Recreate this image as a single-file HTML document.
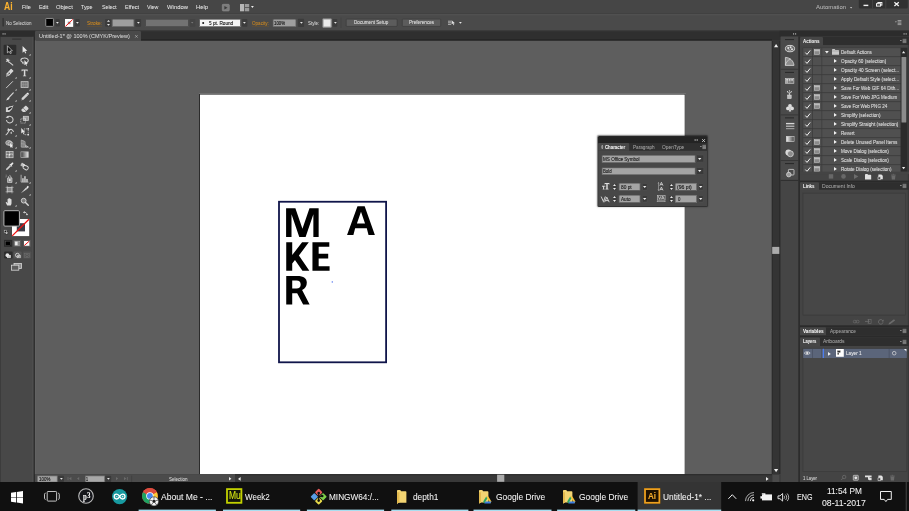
<!DOCTYPE html>
<html lang="en">
<head>
<meta charset="utf-8">
<title>Illustrator</title>
<style>
*{margin:0;padding:0;box-sizing:border-box}
html,body{width:909px;height:511px;overflow:hidden;background:#5e5e5e;font-family:"Liberation Sans",sans-serif;color:#d6d6d6}
body{position:relative}
.a{position:absolute;display:block}
.b{position:absolute;display:block;left:0;top:0;transform-origin:0 0}
.t{position:absolute;display:block;white-space:nowrap;line-height:1;font-size:56px;color:#dcdcdc;transform:scale(.1);transform-origin:0 0;-webkit-text-stroke:.5px currentColor}
svg{position:absolute;display:block;overflow:visible}
</style>
</head>
<body>
<div class="a" id="w" style="left:0;top:0;width:909px;height:511px;overflow:hidden;will-change:transform">
<!-- canvas -->
<div class="b" style="width:7370px;height:4340px;transform:translate(35px,40.6px) scale(.1);background:#5e5e5e;"></div>
<div class="b" style="width:4867px;height:3820px;transform:translate(199px,93.6px) scale(.1);background:#fff;border:10px solid #2b2b2b;"></div>
<svg width="909" height="511" viewBox="0 0 909 511" style="left:0;top:0">
<rect x="279" y="201.75" width="107.1" height="160.55" fill="none" stroke="#10154a" stroke-width="1.8"/>
<g fill="#000">
<path d="M286.09 208.37L295.39 208.37L302.44 228.67L309.48 208.37L318.65 208.37L318.65 236.98L313.36 236.98L313.36 214.22L305.61 236.98L299.27 236.98L291.51 214.22L291.51 236.98L286.09 236.98Z"/>
<path d="M347.05 234.98L357.48 206.37L364.67 206.37L374.88 234.98L368.54 234.98L366.78 228.22L355.15 228.22L353.39 234.98ZM361 211.87L365.02 223.49L356.91 223.49Z" fill-rule="evenodd"/>
<path d="M286.23 242.23L292.22 242.23L292.22 254.92L302.09 242.23L308.79 242.23L298.92 255.62L309.35 270.78L302.44 270.78L294.97 259.92L292.22 263.52L292.22 270.78L286.23 270.78Z"/>
<path d="M312.45 242.23L329.3 242.23L329.3 246.81L318.66 246.81L318.66 253.86L328.2 253.86L328.2 258.44L318.66 258.44L318.66 266.2L329.6 266.2L329.6 270.78L312.45 270.78Z"/>
<path d="M286.23 275.88L297.16 275.88C303.85 275.88 306.81 278.34 306.81 282.57C306.81 286.1 305.26 288.57 302.09 289.98L309.63 304.57L303.15 304.57L297.16 293.15L292.22 293.15L292.22 304.57L286.23 304.57ZM292.22 280.46L292.22 288.57L296.45 288.57C299.27 288.57 300.68 287.16 300.68 284.55C300.68 281.87 299.27 280.46 296.45 280.46Z" fill-rule="evenodd"/>
</g>
<rect x="331.7" y="281.3" width="1.2" height="1.3" fill="#5577ee"/>
</svg>
<!-- top -->
<div class="b" style="width:9090px;height:134px;transform:translate(0px,0px) scale(.1);background:#464646;"></div>
<div class="b" style="width:9090px;height:11px;transform:translate(0px,13.4px) scale(.1);background:#363636;"></div>
<span class="t" id="t1" style="left:4px;top:1px;font-size:106px;color:#fbb230;font-weight:bold;transform:scale(.0811,.1);">Ai</span>
<span class="t" id="t2" style="left:22px;top:4px;font-size:62px;color:#e4e4e4;transform:scale(.0881,.1);">File</span>
<span class="t" id="t3" style="left:38.9px;top:4px;font-size:62px;color:#e4e4e4;transform:scale(.087,.1);">Edit</span>
<span class="t" id="t4" style="left:56.3px;top:4px;font-size:62px;color:#e4e4e4;transform:scale(.0938,.1);">Object</span>
<span class="t" id="t5" style="left:81.2px;top:4px;font-size:62px;color:#e4e4e4;transform:scale(.0856,.1);">Type</span>
<span class="t" id="t6" style="left:101.5px;top:4px;font-size:62px;color:#e4e4e4;transform:scale(.0841,.1);">Select</span>
<span class="t" id="t7" style="left:124.6px;top:4px;font-size:62px;color:#e4e4e4;transform:scale(.0889,.1);">Effect</span>
<span class="t" id="t8" style="left:146.9px;top:4px;font-size:62px;color:#e4e4e4;transform:scale(.0855,.1);">View</span>
<span class="t" id="t9" style="left:167px;top:4px;font-size:62px;color:#e4e4e4;transform:scale(.0952,.1);">Window</span>
<span class="t" id="t10" style="left:195.8px;top:4px;font-size:62px;color:#e4e4e4;transform:scale(.0941,.1);">Help</span>
<svg style="left:222.2px;top:3.6px;" width="7.6" height="7.3" viewBox="0 0 7.6 7.3"><rect x=".3" y=".3" width="7" height="6.700" rx=".900" fill="#7c7c7c" stroke="#8e8e8e" stroke-width=".6"/><path d="M2.400 1.900V5.500L5.500 3.700Z" fill="#3a3a3a"/></svg>
<svg style="left:240px;top:3.6px;" width="9.6" height="7.3" viewBox="0 0 9.6 7.3"><rect x="0" y="0" width="4.200" height="7.300" fill="#b8b8b8"/><rect x="5" y="0" width="4.200" height="3.300" fill="#9c9c9c"/><rect x="5" y="4" width="4.200" height="3.300" fill="#9c9c9c"/></svg>
<svg style="left:250.5px;top:6.2px;" width="2.8" height="2" viewBox="0 0 2.8 2"><path d="M0 0H2.8L1.4 2Z" fill="#ececec"/></svg>
<span class="t" id="t11" style="left:815.8px;top:4px;font-size:60px;color:#b4b4b4;transform:scale(.0988,.1);">Automation</span>
<svg style="left:850.4px;top:7.45px;" width="2.2" height="1.5" viewBox="0 0 2.2 1.5"><path d="M0 0H2.2L1.1 1.5Z" fill="#c8c8c8"/></svg>
<div class="b" style="width:490px;height:84px;transform:translate(858.8px,0px) scale(.1);background:#313131;border-radius:0 0 15px 15px;"></div>
<div class="b" style="width:7px;height:84px;transform:translate(872.3px,0px) scale(.1);background:#4a4a4a;"></div>
<div class="b" style="width:7px;height:84px;transform:translate(885.5px,0px) scale(.1);background:#4a4a4a;"></div>
<div class="b" style="width:48px;height:14px;transform:translate(863.5px,4.7px) scale(.1);background:#f2f2f2;"></div>
<svg style="left:875.8px;top:2.4px;" width="6.4" height="4.4" viewBox="0 0 6.4 4.4"><rect x="1.9" y=".5" width="4" height="2.6" fill="none" stroke="#f2f2f2" stroke-width="1"/><rect x=".5" y="1.7" width="4" height="2.4" fill="#313131" stroke="#f2f2f2" stroke-width="1"/></svg>
<svg style="left:893.8px;top:2.3px;" width="5.2" height="4.4" viewBox="0 0 5.2 4.4"><path d="M.4 .3L4.8 4.1M4.8 .3L.4 4.1" stroke="#f2f2f2" stroke-width="1.3"/></svg>
<div class="b" style="width:9090px;height:156px;transform:translate(0px,14.5px) scale(.1);background:#4a4a4a;"></div>
<div class="b" style="width:9090px;height:7px;transform:translate(0px,14.5px) scale(.1);background:#585858;"></div>
<div class="b" style="width:12px;height:84px;transform:translate(2.5px,18px) scale(.1);background:#2e2e2e;"></div>
<span class="t" id="t12" style="left:6.3px;top:21px;font-size:49px;color:#d2d2d2;transform:scale(.0914,.1);">No Selection</span>
<div class="b" style="width:86px;height:88px;transform:translate(45.3px,18px) scale(.1);background:#000;border:9px solid #9c9c9c;border-radius:12px;"></div>
<div class="b" style="width:46px;height:75px;transform:translate(55.3px,18.9px) scale(.1);background:#3c3c3c;border-radius:10px;"></div><svg style="left:56.2px;top:22px;" width="2.8" height="1.7" viewBox="0 0 2.8 1.7"><path d="M0 0H2.8L1.4 1.7Z" fill="#e6e6e6"/></svg>
<svg style="left:65px;top:18.9px;" width="8.2" height="7.9" viewBox="0 0 8.2 7.9"><rect width="8.2" height="7.9" fill="#fff"/><rect x="2.8" y="2.6" width="2.6" height="2.6" fill="#8d8d8d"/><path d="M.4 7.5L7.8 .4" stroke="#ee1111" stroke-width="1"/></svg>
<div class="b" style="width:46px;height:75px;transform:translate(75.2px,18.9px) scale(.1);background:#3c3c3c;border-radius:10px;"></div><svg style="left:76.1px;top:22px;" width="2.8" height="1.7" viewBox="0 0 2.8 1.7"><path d="M0 0H2.8L1.4 1.7Z" fill="#e6e6e6"/></svg>
<span class="t" id="t13" style="left:86.6px;top:21px;font-size:52px;color:#d18a1f;transform:scale(.0905,.1);border-bottom:4px dotted #8a5c1c;padding-bottom:3px;">Stroke:</span>
<div class="b" style="width:60px;height:78px;transform:translate(105px,19px) scale(.1);background:#3c3c3c;border-radius:10px;"></div>
<svg style="left:106.5px;top:20.1px;" width="3" height="1.8" viewBox="0 0 3 1.8"><path d="M0 1.8H3L1.5 0Z" fill="#e6e6e6"/></svg>
<svg style="left:106.5px;top:23.9px;" width="3" height="1.8" viewBox="0 0 3 1.8"><path d="M0 0H3L1.5 1.8Z" fill="#e6e6e6"/></svg>
<div class="b" style="width:220px;height:78px;transform:translate(112.1px,19px) scale(.1);background:#9e9e9e;border:4px solid #3c3c3c;"></div>
<div class="b" style="width:59px;height:78px;transform:translate(135.2px,19px) scale(.1);background:#3c3c3c;border-radius:10px;"></div><svg style="left:136.75px;top:22.25px;" width="2.8" height="1.7" viewBox="0 0 2.8 1.7"><path d="M0 0H2.8L1.4 1.7Z" fill="#e6e6e6"/></svg>
<div class="b" style="width:430px;height:78px;transform:translate(145.5px,19px) scale(.1);background:#727272;border:5px solid #3a3a3a;"></div>
<div class="b" style="width:55px;height:78px;transform:translate(189.8px,19px) scale(.1);background:#444;border-radius:10px;"></div>
<svg style="left:191.3px;top:22.35px;" width="2.4" height="1.5" viewBox="0 0 2.4 1.5"><path d="M0 0H2.4L1.2 1.5Z" fill="#7a7a7a"/></svg>
<div class="b" style="width:410px;height:78px;transform:translate(199.5px,19px) scale(.1);background:#f4f4f4;border:5px solid #2c2c2c;"></div>
<div class="b" style="width:20px;height:20px;transform:translate(202.2px,21.9px) scale(.1);background:#111;border-radius:50%;"></div>
<span class="t" id="t14" style="left:209.1px;top:21px;font-size:48px;color:#151515;transform:scale(.0975,.1);-webkit-text-stroke:1.2px currentColor;">5 pt. Round</span>
<div class="b" style="width:54px;height:78px;transform:translate(242px,19px) scale(.1);background:#3c3c3c;border-radius:10px;"></div><svg style="left:243.3px;top:22.25px;" width="2.8" height="1.7" viewBox="0 0 2.8 1.7"><path d="M0 0H2.8L1.4 1.7Z" fill="#e6e6e6"/></svg>
<span class="t" id="t15" style="left:252px;top:21px;font-size:52px;color:#d18a1f;transform:scale(.0881,.1);border-bottom:4px dotted #8a5c1c;padding-bottom:3px;">Opacity:</span>
<div class="b" style="width:232px;height:78px;transform:translate(272.9px,19px) scale(.1);background:#9e9e9e;border:4px solid #3c3c3c;"></div>
<span class="t" id="t16" style="left:274.2px;top:21px;font-size:48px;color:#151515;transform:scale(.0912,.1);-webkit-text-stroke:1.2px currentColor;">100%</span>
<div class="b" style="width:62px;height:82px;transform:translate(297.9px,18.8px) scale(.1);background:#3c3c3c;border-radius:10px;"></div><svg style="left:299.6px;top:22.25px;" width="2.8" height="1.7" viewBox="0 0 2.8 1.7"><path d="M0 0H2.8L1.4 1.7Z" fill="#e6e6e6"/></svg>
<span class="t" id="t17" style="left:307.5px;top:21px;font-size:52px;color:#d8d8d8;transform:scale(.0869,.1);">Style:</span>
<div class="b" style="width:85px;height:85px;transform:translate(322.8px,18.8px) scale(.1);background:#ececec;border:8px solid #a2a2a2;"></div>
<div class="b" style="width:46px;height:78px;transform:translate(332.7px,19px) scale(.1);background:#3c3c3c;border-radius:10px;"></div><svg style="left:333.6px;top:22.25px;" width="2.8" height="1.7" viewBox="0 0 2.8 1.7"><path d="M0 0H2.8L1.4 1.7Z" fill="#e6e6e6"/></svg>
<div class="b" style="width:6px;height:105px;transform:translate(340.7px,17.5px) scale(.1);background:#414141;"></div>
<div class="b" style="width:515px;height:79px;transform:translate(345.9px,18.8px) scale(.1);background:#5c5c5c;border:6px solid #353535;border-radius:10px;"></div>
<span class="t" id="t18" style="left:354.3px;top:20px;font-size:49px;color:#e2e2e2;transform:scale(.094,.1);">Document Setup</span>
<div class="b" style="width:390px;height:79px;transform:translate(402px,18.8px) scale(.1);background:#5c5c5c;border:6px solid #353535;border-radius:10px;"></div>
<span class="t" id="t19" style="left:409.2px;top:20px;font-size:49px;color:#e2e2e2;transform:scale(.0954,.1);">Preferences</span>
<svg style="left:447.5px;top:20.3px;" width="7.2" height="5.4" viewBox="0 0 7.2 5.4"><path d="M0 1.2H3M0 2.8H3M0 4.4H3" stroke="#c8c8c8" stroke-width=".8"/><path d="M3.6 .2V4.6L4.8 3.6L5.6 5.3L6.3 5L5.5 3.3H7Z" fill="#e0e0e0"/></svg>
<svg style="left:458.6px;top:22.1px;" width="2.8" height="1.8" viewBox="0 0 2.8 1.8"><path d="M0 0H2.8L1.4 1.8Z" fill="#e6e6e6"/></svg>
<svg style="left:894.5px;top:20.4px;" width="6.4" height="4.8" viewBox="0 0 6.4 4.8"><path d="M0 1.5H1.8L.9 2.6Z" fill="#cfcfcf"/><path d="M2.6 .5H6.4M2.6 1.9H6.4M2.6 3.3H6.4M2.6 4.6H6.4" stroke="#bdbdbd" stroke-width=".7"/></svg>
<div class="b" style="width:9090px;height:103px;transform:translate(0px,30.1px) scale(.1);background:#2f2f2f;"></div>
<div class="b" style="width:6310px;height:13px;transform:translate(141px,39.3px) scale(.1);background:#232323;"></div>
<div class="b" style="width:9090px;height:12px;transform:translate(0px,30.1px) scale(.1);background:#3c3c3c;"></div>
<div class="b" style="width:1060px;height:94px;transform:translate(35px,31px) scale(.1);background:#4a4a4a;border-radius:12px 12px 0 0;"></div>
<span class="t" id="t20" style="left:39.3px;top:33px;font-size:53px;color:#d6d6d6;transform:scale(.1042,.1);">Untitled-1* @ 100% (CMYK/Preview)</span>
<svg style="left:135.4px;top:34.6px;" width="2.8" height="2.8" viewBox="0 0 2.8 2.8"><path d="M.2 .2L2.600 2.600M2.600 .2L.2 2.600" stroke="#b4b4b4" stroke-width=".7"/></svg>
<!-- tools -->
<div class="b" style="width:342px;height:4458px;transform:translate(0px,36.6px) scale(.1);background:#484848;"></div>
<div class="b" style="width:18px;height:4458px;transform:translate(32px,36.6px) scale(.1);background:#4d4d4d;"></div>
<div class="b" style="width:12px;height:4458px;transform:translate(33.7px,36.6px) scale(.1);background:#272727;"></div>
<div class="b" style="width:12px;height:4340px;transform:translate(34.9px,40.4px) scale(.1);background:#626262;"></div>
<div class="b" style="width:8px;height:4458px;transform:translate(0px,36.6px) scale(.1);background:#3a3a3a;"></div>
<div class="b" style="width:350px;height:58px;transform:translate(0px,30.8px) scale(.1);background:#2c2c2c;"></div>
<svg style="left:2.2px;top:33.3px;" width="3.6" height="1.8" viewBox="0 0 3.6 1.8"><path d="M1.5 0V1.8L0 .9ZM3.5 0V1.8L2 .9Z" fill="#bdbdbd"/></svg>
<div class="b" style="width:92px;height:8px;transform:translate(12.2px,38.7px) scale(.1);background:#2a2a2a;"></div>
<div class="b" style="width:127px;height:102px;transform:translate(3.6px,44.8px) scale(.1);background:#2c2c2c;border-radius:10px;"></div>
<svg style="left:5.1px;top:45.1px;" width="9.2" height="9.2" viewBox="0 0 10 10"><path d="M2.6 .8L2.6 8.6L4.5 6.9L5.8 9.4L6.9 8.9L5.7 6.5L8 6.3Z" fill="#111" stroke="#cfcfcf" stroke-width=".8" stroke-linejoin="round"/></svg>
<svg style="left:19.5px;top:45.1px;" width="9.2" height="9.2" viewBox="0 0 10 10"><path d="M2.8 1.2L2.8 8.4L4.6 6.8L5.8 9.2L6.8 8.7L5.7 6.4L7.9 6.2Z" fill="#e6e6e6"/></svg><svg style="left:28.9px;top:53.6px;" width="1.5" height="1.5" viewBox="0 0 1.5 1.5"><path d="M1.6 0V1.6H0Z" fill="#e8e8e8"/></svg>
<svg style="left:5.1px;top:56.78px;" width="9.2" height="9.2" viewBox="0 0 10 10"><path d="M4.2 5.2L8.9 9.2" stroke="#d8d8d8" stroke-width="1.1"/><path d="M3.2 .8L3.8 2.9L6 3.2L4.1 4.2L4.3 6.4L2.9 4.8L.8 5.4L2 3.6L.9 1.8L2.9 2.4Z" fill="#dcdcdc"/></svg>
<svg style="left:19.5px;top:56.78px;" width="9.2" height="9.2" viewBox="0 0 10 10"><path d="M4.6 1.2C7 1 9 2.2 9 3.9C9 5.3 7.6 6.2 6 6.3M3.4 5.9C1.8 5.4 .8 4.6 .9 3.5C1 2.2 2.6 1.3 4.6 1.2" fill="none" stroke="#d4d4d4" stroke-width="1.1"/><path d="M4.8 3.4L4.8 9L6 7.9L6.9 9.6L7.7 9.2L6.9 7.6L8.5 7.5Z" fill="#e6e6e6"/><circle cx="3.5" cy="6.5" r=".9" fill="none" stroke="#d4d4d4" stroke-width=".7"/></svg>
<svg style="left:5.1px;top:68.46px;" width="9.2" height="9.2" viewBox="0 0 10 10"><path d="M1 9.4L2 5.6L6.2 1.2L8.8 3.8L4.6 8.2Z" fill="#d8d8d8"/><path d="M1.4 9L4.3 6.1" stroke="#4a4a4a" stroke-width=".7"/><circle cx="4.6" cy="5.6" r=".8" fill="#4a4a4a"/><path d="M6.7 .7L9.3 3.3L8.7 3.9L6.1 1.3Z" fill="#f0f0f0"/></svg><svg style="left:14.5px;top:76.96px;" width="1.5" height="1.5" viewBox="0 0 1.5 1.5"><path d="M1.6 0V1.6H0Z" fill="#e8e8e8"/></svg>
<svg style="left:19.5px;top:68.46px;" width="9.2" height="9.2" viewBox="0 0 10 10"><path d="M1.7 1.6H8.3V3.6H7.6C7.5 2.8 7.2 2.6 6.4 2.6H5.8V7.6C5.8 8.2 6 8.4 6.8 8.4V9H3.2V8.4C4 8.4 4.2 8.2 4.2 7.6V2.6H3.6C2.8 2.6 2.5 2.8 2.4 3.6H1.7Z" fill="#dadada"/></svg><svg style="left:28.9px;top:76.96px;" width="1.5" height="1.5" viewBox="0 0 1.5 1.5"><path d="M1.6 0V1.6H0Z" fill="#e8e8e8"/></svg>
<svg style="left:5.1px;top:80.14px;" width="9.2" height="9.2" viewBox="0 0 10 10"><path d="M1.2 8.8L8.6 1.4" stroke="#d4d4d4" stroke-width="1"/></svg><svg style="left:14.5px;top:88.64px;" width="1.5" height="1.5" viewBox="0 0 1.5 1.5"><path d="M1.6 0V1.6H0Z" fill="#e8e8e8"/></svg>
<svg style="left:19.5px;top:80.14px;" width="9.2" height="9.2" viewBox="0 0 10 10"><rect x="1.2" y="1.8" width="7.6" height="6.4" fill="#7a7a7a" stroke="#c8c8c8" stroke-width=".9"/><path d="M3.7 1.8V8.2M6.3 1.8V8.2M1.2 5H8.8" stroke="#9c9c9c" stroke-width=".5"/></svg><svg style="left:28.9px;top:88.64px;" width="1.5" height="1.5" viewBox="0 0 1.5 1.5"><path d="M1.6 0V1.6H0Z" fill="#e8e8e8"/></svg>
<svg style="left:5.1px;top:91.82px;" width="9.2" height="9.2" viewBox="0 0 10 10"><path d="M9 1L4.6 5.6" stroke="#d6d6d6" stroke-width="1.3" stroke-linecap="round"/><path d="M1 8.9C2.6 9.1 4.4 8.4 4.9 6.9C5.1 6.2 4.4 5.4 3.6 5.7C2.4 6.2 2.6 8 1 8.9Z" fill="#e2e2e2"/></svg><svg style="left:14.5px;top:100.32px;" width="1.5" height="1.5" viewBox="0 0 1.5 1.5"><path d="M1.6 0V1.6H0Z" fill="#e8e8e8"/></svg>
<svg style="left:19.5px;top:91.82px;" width="9.2" height="9.2" viewBox="0 0 10 10"><path d="M1.2 9.2L1.9 6.6L6.9 1.6L8.8 3.5L3.8 8.5Z" fill="#d2d2d2"/><path d="M7.4 1.1C7.9 .6 8.7 .6 9.2 1.1C9.7 1.6 9.7 2.4 9.2 2.9L8.8 3.3L7 1.5Z" fill="#f2f2f2"/><path d="M1.2 9.2L1.6 7.7L2.7 8.8Z" fill="#3a3a3a"/></svg><svg style="left:28.9px;top:100.32px;" width="1.5" height="1.5" viewBox="0 0 1.5 1.5"><path d="M1.6 0V1.6H0Z" fill="#e8e8e8"/></svg>
<svg style="left:5.1px;top:103.5px;" width="9.2" height="9.2" viewBox="0 0 10 10"><path d="M1 3.6L4.2 3.6L4.2 2.6L7.8 2.2L9.4 1L8.6 2.8L7.6 5.8L4.6 8.6L1 8.6Z" fill="#d2d2d2"/><path d="M3 5.8C4 4.4 6 3.6 7.8 3.4C7.4 5 5.6 6.6 3.6 6.9Z" fill="#222"/></svg>
<svg style="left:19.5px;top:103.5px;" width="9.2" height="9.2" viewBox="0 0 10 10"><path d="M1.4 6.2L5.6 2.2C6 1.8 6.6 1.8 7 2.2L9 4.2C9.4 4.6 9.4 5.2 9 5.6L5.6 8.6H3.2L1.4 6.9C1.2 6.7 1.2 6.4 1.4 6.2Z" fill="#d6d6d6"/><path d="M3.4 4.4L6.6 7.6" stroke="#6a6a6a" stroke-width=".8"/></svg><svg style="left:28.9px;top:112px;" width="1.5" height="1.5" viewBox="0 0 1.5 1.5"><path d="M1.6 0V1.6H0Z" fill="#e8e8e8"/></svg>
<svg style="left:5.1px;top:115.18px;" width="9.2" height="9.2" viewBox="0 0 10 10"><path d="M3 2.2A3.6 3.6 0 1 1 1.6 5.4" fill="none" stroke="#d2d2d2" stroke-width="1.1"/><path d="M.6 2.8L3.6 .6L3.8 3.6Z" fill="#d2d2d2"/></svg><svg style="left:14.5px;top:123.68px;" width="1.5" height="1.5" viewBox="0 0 1.5 1.5"><path d="M1.6 0V1.6H0Z" fill="#e8e8e8"/></svg>
<svg style="left:19.5px;top:115.18px;" width="9.2" height="9.2" viewBox="0 0 10 10"><rect x="3.6" y="1.4" width="5.6" height="4.6" fill="#9a9a9a" stroke="#d0d0d0" stroke-width=".8"/><rect x=".8" y="4.2" width="5.2" height="4.6" fill="none" stroke="#c2c2c2" stroke-width=".8" stroke-dasharray="1.2 .8"/><path d="M3 3.4L5.8 3.4L5.8 6.2" fill="none" stroke="#e6e6e6" stroke-width=".7"/></svg><svg style="left:28.9px;top:123.68px;" width="1.5" height="1.5" viewBox="0 0 1.5 1.5"><path d="M1.6 0V1.6H0Z" fill="#e8e8e8"/></svg>
<svg style="left:5.1px;top:126.86px;" width="9.2" height="9.2" viewBox="0 0 10 10"><path d="M.8 8.6C2.6 8 3.2 6.2 4 4.6C4.6 3.2 5.8 2.2 7.2 2.8C8.2 3.2 8.8 4.4 9.4 5.2" fill="none" stroke="#d4d4d4" stroke-width="1.2"/><path d="M3.2 1.2L5.6 3.4L2.6 4.4Z" fill="#e0e0e0"/><path d="M5.4 6.6L7.4 4.8L7.6 7.6Z" fill="#c8c8c8"/></svg><svg style="left:14.5px;top:135.36px;" width="1.5" height="1.5" viewBox="0 0 1.5 1.5"><path d="M1.6 0V1.6H0Z" fill="#e8e8e8"/></svg>
<svg style="left:19.5px;top:126.86px;" width="9.2" height="9.2" viewBox="0 0 10 10"><path d="M1.4 1.2L1.4 7L2.8 5.8L3.8 7.8L4.6 7.4L3.7 5.5L5.4 5.4Z" fill="#e8e8e8"/><rect x="4.6" y="2" width="4.4" height="6.4" fill="none" stroke="#c8c8c8" stroke-width=".8" stroke-dasharray="1.1 .8"/><rect x="8.2" y="1.2" width="1.6" height="1.6" fill="#e0e0e0"/><rect x="8.2" y="7.6" width="1.6" height="1.6" fill="#e0e0e0"/></svg>
<svg style="left:5.1px;top:138.54px;" width="9.2" height="9.2" viewBox="0 0 10 10"><ellipse cx="4" cy="4.2" rx="3.2" ry="2.6" fill="#8a8a8a" stroke="#d0d0d0" stroke-width=".8"/><ellipse cx="5.8" cy="5" rx="2.6" ry="2.2" fill="none" stroke="#d0d0d0" stroke-width=".8"/><path d="M5.6 4.4L5.6 9.4L6.8 8.4L7.6 9.9L8.3 9.5L7.6 8.1L9 8Z" fill="#f0f0f0"/></svg><svg style="left:14.5px;top:147.04px;" width="1.5" height="1.5" viewBox="0 0 1.5 1.5"><path d="M1.6 0V1.6H0Z" fill="#e8e8e8"/></svg>
<svg style="left:19.5px;top:138.54px;" width="9.2" height="9.2" viewBox="0 0 10 10"><path d="M1.4 1.2V8.8M3.4 2V8.8M5.4 2.8V8.8M1.4 1.2L5.4 2.8M1.4 5L5.4 5.6M1.4 8.8H9.2M5.4 6.4L9.2 8.8M5.4 7.6L7.4 8.8" stroke="#d0d0d0" stroke-width=".8" fill="none"/><path d="M1.4 1.2L5.4 2.8V8.8H1.4Z" fill="#8c8c8c" opacity=".7"/></svg><svg style="left:28.9px;top:147.04px;" width="1.5" height="1.5" viewBox="0 0 1.5 1.5"><path d="M1.6 0V1.6H0Z" fill="#e8e8e8"/></svg>
<svg style="left:5.1px;top:150.22px;" width="9.2" height="9.2" viewBox="0 0 10 10"><rect x="1.2" y="1.6" width="7.6" height="6.8" fill="#7a7a7a" stroke="#d0d0d0" stroke-width=".8"/><path d="M1.2 5C3 4 4 6 5 5S7.4 4.2 8.8 5M5 1.6C4.2 3.4 5.8 4.4 5 5.4S4.4 7.2 5 8.4" fill="none" stroke="#e4e4e4" stroke-width=".7"/><circle cx="5" cy="5.1" r=".8" fill="#f4f4f4"/></svg>
<svg style="left:19.5px;top:150.22px;" width="9.2" height="9.2" viewBox="0 0 10 10"><defs><linearGradient id="gg"><stop offset="0" stop-color="#3a3a3a"/><stop offset="1" stop-color="#e4e4e4"/></linearGradient></defs><rect x="1" y="2" width="8" height="6" fill="url(#gg)" stroke="#bcbcbc" stroke-width=".7"/></svg>
<svg style="left:5.1px;top:161.9px;" width="9.2" height="9.2" viewBox="0 0 10 10"><path d="M1 9L1.6 7.2L5.4 3.4L6.6 4.6L2.8 8.4Z" fill="#d0d0d0"/><path d="M4.9 2.6L7.4 5.1L8 4.5L7.2 3.7L8.8 2.1C9.3 1.6 9.3 1.1 8.9 .7C8.5 .3 8 .3 7.5 .8L5.9 2.4L5.5 2Z" fill="#ececec"/></svg><svg style="left:14.5px;top:170.4px;" width="1.5" height="1.5" viewBox="0 0 1.5 1.5"><path d="M1.6 0V1.6H0Z" fill="#e8e8e8"/></svg>
<svg style="left:19.5px;top:161.9px;" width="9.2" height="9.2" viewBox="0 0 10 10"><rect x="1" y="1.4" width="4.2" height="3.6" rx=".6" fill="#bdbdbd" transform="rotate(28 3 3)"/><rect x="3.4" y="4" width="5.6" height="4" rx="1.6" fill="none" stroke="#dadada" stroke-width="1" transform="rotate(28 6 6)"/><path d="M2.6 2L6.2 4.2" stroke="#e6e6e6" stroke-width=".9"/></svg>
<svg style="left:5.1px;top:173.58px;" width="9.2" height="9.2" viewBox="0 0 10 10"><path d="M2.8 4.4H7.6V9.2H2.8Z" fill="#8e8e8e" stroke="#d2d2d2" stroke-width=".8"/><path d="M3.8 4.4V3L5.2 1.6L6.6 3V4.4" fill="none" stroke="#d2d2d2" stroke-width=".8"/><circle cx="5.2" cy="6.6" r="1.2" fill="#e0e0e0"/><path d="M.8 1.2H1.6M1.6 2.4H2.4M.6 3.2H1.4" stroke="#d0d0d0" stroke-width=".6"/></svg><svg style="left:14.5px;top:182.08px;" width="1.5" height="1.5" viewBox="0 0 1.5 1.5"><path d="M1.6 0V1.6H0Z" fill="#e8e8e8"/></svg>
<svg style="left:19.5px;top:173.58px;" width="9.2" height="9.2" viewBox="0 0 10 10"><path d="M1.2 .8V8.8H9.2" fill="none" stroke="#d2d2d2" stroke-width=".8"/><rect x="2.4" y="4.6" width="1.6" height="4" fill="#d0d0d0"/><rect x="4.6" y="2.4" width="1.6" height="6.2" fill="#d0d0d0"/><rect x="6.8" y="5.4" width="1.6" height="3.2" fill="#d0d0d0"/></svg><svg style="left:28.9px;top:182.08px;" width="1.5" height="1.5" viewBox="0 0 1.5 1.5"><path d="M1.6 0V1.6H0Z" fill="#e8e8e8"/></svg>
<svg style="left:5.1px;top:185.26px;" width="9.2" height="9.2" viewBox="0 0 10 10"><rect x="2.4" y="2.6" width="5.2" height="4.8" fill="#8a8a8a" stroke="#cfcfcf" stroke-width=".7"/><path d="M.6 2.6H9.4M.6 7.4H9.4M2.4 .8V9.2M7.6 .8V9.2" stroke="#c4c4c4" stroke-width=".6"/></svg>
<svg style="left:19.5px;top:185.26px;" width="9.2" height="9.2" viewBox="0 0 10 10"><path d="M1 9L6.6 2.8L8.2 4.2Z" fill="#d4d4d4"/><path d="M6.9 2.5L8.6 .8L9.6 1.8L8.4 4Z" fill="#f0f0f0"/></svg><svg style="left:28.9px;top:193.76px;" width="1.5" height="1.5" viewBox="0 0 1.5 1.5"><path d="M1.6 0V1.6H0Z" fill="#e8e8e8"/></svg>
<svg style="left:5.1px;top:196.94px;" width="9.2" height="9.2" viewBox="0 0 10 10"><path d="M2.4 9.2L.9 6.2C.6 5.6 1.4 5.1 1.9 5.7L2.8 6.8V2.4C2.8 1.6 3.8 1.6 3.8 2.4V1.6C3.8 .8 4.9 .8 4.9 1.6V2C4.9 1.3 6 1.3 6 2.1V2.8C6 2.1 7.1 2.1 7.1 2.9V6.4C7.1 7.6 6.6 8.4 6.2 9.2Z" fill="#dcdcdc"/></svg><svg style="left:14.5px;top:205.44px;" width="1.5" height="1.5" viewBox="0 0 1.5 1.5"><path d="M1.6 0V1.6H0Z" fill="#e8e8e8"/></svg>
<svg style="left:19.5px;top:196.94px;" width="9.2" height="9.2" viewBox="0 0 10 10"><circle cx="4" cy="4" r="2.6" fill="#7c7c7c" stroke="#d6d6d6" stroke-width="1"/><path d="M6 6L9 9" stroke="#d6d6d6" stroke-width="1.5" stroke-linecap="round"/></svg>
<svg style="left:11.6px;top:218.7px;" width="17.2" height="17.1" viewBox="0 0 17.2 17.1"><rect width="17.2" height="17.1" fill="#fff"/><rect x="4.8" y="4.2" width="8.2" height="8.2" fill="#3c3c46"/><path d="M.2 16.9L17 .3" stroke="#f01010" stroke-width="1.3"/></svg>
<div class="b" style="width:165px;height:164px;transform:translate(3.4px,210.2px) scale(.1);background:#000;border:10px solid #b4b4b4;border-radius:15px;"></div>
<svg style="left:23.3px;top:211px;" width="5" height="4.6" viewBox="0 0 5 4.6"><path d="M.6 1.4C2.6 .8 4 2 4 4" fill="none" stroke="#cfcfcf" stroke-width=".9"/><path d="M0 1.4L1.8 0V2.6ZM4 4.6L2.8 3H5.2Z" fill="#cfcfcf"/></svg>
<svg style="left:3.8px;top:230.3px;" width="4" height="4.2" viewBox="0 0 4 4.2"><rect x="1.4" y="1.6" width="2.4" height="2.4" fill="#fff" stroke="#222" stroke-width=".5"/><rect x=".2" y=".2" width="2.4" height="2.4" fill="#111" stroke="#ddd" stroke-width=".5"/></svg>
<div class="b" style="width:80px;height:69px;transform:translate(4.1px,239.9px) scale(.1);background:#2a2a2a;"></div>
<div class="b" style="width:54px;height:48px;transform:translate(5.4px,241px) scale(.1);background:#000;border:5px solid #555;"></div>
<div class="b" style="width:78px;height:69px;transform:translate(13.4px,239.9px) scale(.1);background:#5a5a5a;"></div>
<div class="b" style="width:54px;height:48px;transform:translate(14.6px,241px) scale(.1);background:linear-gradient(90deg,#fff,#e8e8e8 40%,#555);border:5px solid #bbb;"></div>
<div class="b" style="width:75px;height:69px;transform:translate(23.3px,239.9px) scale(.1);background:#5a5a5a;"></div>
<svg style="left:24.4px;top:241px;" width="5.4" height="4.8" viewBox="0 0 5.4 4.8"><rect width="5.4" height="4.8" fill="#fff"/><path d="M.2 4.6L5.2 .2" stroke="#f01010" stroke-width="1"/></svg>
<div class="b" style="width:85px;height:68px;transform:translate(4.1px,251.6px) scale(.1);background:#2c2c2c;border-radius:10px;"></div>
<svg style="left:5.4px;top:252.6px;" width="6" height="5" viewBox="0 0 6 5"><circle cx="2.4" cy="2.2" r="1.9" fill="#e4e4e4"/><rect x="2.6" y="2.2" width="3" height="2.6" fill="#c8c8c8" stroke="#f0f0f0" stroke-width=".5"/></svg>
<div class="b" style="width:79px;height:68px;transform:translate(13.7px,251.6px) scale(.1);background:#565656;border-radius:10px;"></div>
<svg style="left:14.6px;top:252.6px;" width="6" height="5" viewBox="0 0 6 5"><rect x="2.6" y="2.2" width="3" height="2.6" fill="#9a9a9a" stroke="#d0d0d0" stroke-width=".5"/><circle cx="2.4" cy="2.2" r="1.9" fill="none" stroke="#dadada" stroke-width=".9"/></svg>
<div class="b" style="width:82px;height:68px;transform:translate(23px,251.6px) scale(.1);background:#525252;border-radius:10px;"></div>
<svg style="left:24.2px;top:252.6px;" width="6" height="5" viewBox="0 0 6 5"><rect x=".6" y=".4" width="4.8" height="4.2" fill="none" stroke="#6c6c6c" stroke-width=".6"/><circle cx="3" cy="2.5" r="1.3" fill="none" stroke="#6e6e6e" stroke-width=".7"/></svg>
<svg style="left:11px;top:263.2px;" width="11" height="7.6" viewBox="0 0 11 7.6"><rect x="3" y=".4" width="7.6" height="5" fill="#8c8c8c" stroke="#d6d6d6" stroke-width=".8"/><rect x=".4" y="2.2" width="7.4" height="5" fill="#5c5c5c" stroke="#d6d6d6" stroke-width=".8"/></svg>
<!-- charpanel -->
<div class="b" style="width:1100px;height:710px;transform:translate(597.6px,135.9px) scale(.1);background:#2a2a2a;border-radius:15px;box-shadow:0 0 15px rgba(0,0,0,.5);"></div>
<div class="b" style="width:1088px;height:67px;transform:translate(598.2px,136.4px) scale(.1);background:#232323;border-radius:12px 12px 0 0;"></div>
<div class="b" style="width:1088px;height:76px;transform:translate(598.2px,143.1px) scale(.1);background:#2f2f2f;"></div>
<div class="b" style="width:1088px;height:556px;transform:translate(598.2px,150.7px) scale(.1);background:#484848;"></div>
<svg style="left:694.2px;top:139.1px;" width="3.8" height="1.9" viewBox="0 0 3.8 1.9"><path d="M1.6 0V1.9L0 .95ZM3.7 0V1.9L2.1 .95Z" fill="#bdbdbd"/></svg>
<svg style="left:702.1px;top:138.5px;" width="3.1" height="3.1" viewBox="0 0 3.1 3.1"><path d="M.2 .2L2.9 2.9M2.9 .2L.2 2.9" stroke="#d8d8d8" stroke-width=".9"/></svg>
<div class="b" style="width:310px;height:76px;transform:translate(598.2px,143.1px) scale(.1);background:#484848;border-radius:10px 10px 0 0;"></div>
<svg style="left:600.6px;top:145.3px;" width="2.4" height="4" viewBox="0 0 2.4 4"><path d="M1.2 0L2.3 1.4H.1ZM1.2 4L2.3 2.6H.1Z" fill="#e0e0e0"/></svg>
<span class="t" id="t21" style="left:604.6px;top:145px;font-size:48px;color:#f4f4f4;font-weight:bold;transform:scale(.0901,.1);">Character</span>
<span class="t" id="t22" style="left:632.8px;top:145px;font-size:48px;color:#a4a4a4;transform:scale(.0968,.1);">Paragraph</span>
<span class="t" id="t23" style="left:661.9px;top:145px;font-size:48px;color:#a4a4a4;transform:scale(.1007,.1);">OpenType</span>
<svg style="left:699.8px;top:145.4px;" width="6" height="3.8" viewBox="0 0 6 3.8"><path d="M0 1H1.8L.9 2.1Z" fill="#cfcfcf"/><path d="M2.4 .3H6M2.4 1.4H6M2.4 2.5H6M2.4 3.6H6" stroke="#bdbdbd" stroke-width=".6"/></svg>
<div class="b" style="width:934px;height:77px;transform:translate(601.9px,155.1px) scale(.1);background:#a4a4a4;border:4px solid #3a3a3a;"></div>
<span class="t" id="t24" style="left:603.3px;top:157px;font-size:48px;color:#1e1e1e;transform:scale(.0955,.1);-webkit-text-stroke:1.3px currentColor;">MS Office Symbol</span>
<div class="b" style="width:77px;height:76px;transform:translate(696.3px,154.8px) scale(.1);background:#393939;border-radius:10px;border:5px solid #545454;"></div><svg style="left:698.45px;top:157.75px;" width="3.4" height="2.1" viewBox="0 0 3.4 2.1"><path d="M0 0H3.4L1.7 2.1Z" fill="#f0f0f0"/></svg>
<div class="b" style="width:934px;height:72px;transform:translate(601.9px,167.7px) scale(.1);background:#a4a4a4;border:4px solid #3a3a3a;"></div>
<span class="t" id="t25" style="left:603.3px;top:169px;font-size:48px;color:#1e1e1e;transform:scale(.0895,.1);-webkit-text-stroke:1.3px currentColor;">Bold</span>
<div class="b" style="width:77px;height:76px;transform:translate(696.3px,167.2px) scale(.1);background:#393939;border-radius:10px;border:5px solid #545454;"></div><svg style="left:698.45px;top:170.15px;" width="3.4" height="2.1" viewBox="0 0 3.4 2.1"><path d="M0 0H3.4L1.7 2.1Z" fill="#f0f0f0"/></svg>
<svg style="left:601.7px;top:183.3px;" width="7.4" height="6.4" viewBox="0 0 7.4 6.4"><path d="M2.6 0H7.4V1.6H6.9C6.8 1 6.6 .9 6 .9H5.7V5.2C5.7 5.7 5.9 5.8 6.5 5.8V6.4H3.5V5.8C4.100 5.8 4.3 5.700 4.3 5.2V.9H4C3.4 .9 3.2 1 3.100 1.6H2.6Z" fill="#dedede"/><path d="M0 2.800H3.2V4H2.900C2.800 3.600 2.700 3.500 2.300 3.500H2.100V5.600C2.100 5.900 2.200 5.900 2.600 5.900V6.400H.700V5.900C1 5.900 1.100 5.900 1.100 5.600V3.500H.900C.500 3.500 .400 3.600 .300 4H0Z" fill="#dedede"/></svg>
<div class="b" style="width:48px;height:72px;transform:translate(612.3px,183.4px) scale(.1);background:#3d3d3d;border-radius:10px;border:4px solid #505050;"></div><svg style="left:613.2px;top:184.39px;" width="3" height="1.9" viewBox="0 0 3 1.9"><path d="M0 1.9H3L1.5 0Z" fill="#ececec"/></svg><svg style="left:613.2px;top:187.71px;" width="3" height="1.9" viewBox="0 0 3 1.9"><path d="M0 0H3L1.5 1.9Z" fill="#ececec"/></svg>
<div class="b" style="width:213px;height:75px;transform:translate(618.9px,183px) scale(.1);background:#a4a4a4;border:4px solid #3a3a3a;"></div>
<span class="t" id="t26" style="left:620.6px;top:185px;font-size:47px;color:#1e1e1e;transform:scale(.1024,.1);-webkit-text-stroke:1.3px currentColor;">80 pt</span>
<div class="b" style="width:52px;height:70px;transform:translate(642.2px,183.3px) scale(.1);background:#393939;border-radius:10px;border:5px solid #545454;"></div><svg style="left:643.1px;top:185.95px;" width="3.4" height="2.1" viewBox="0 0 3.4 2.1"><path d="M0 0H3.4L1.7 2.1Z" fill="#f0f0f0"/></svg>
<svg style="left:658.2px;top:182.4px;" width="6.8" height="8.6" viewBox="0 0 6.8 8.6"><path d="M1.800 3.600L3.400 .300L5 3.600M2.400 2.600H4.400M1.800 8.400L3.400 5.100L5 8.400M2.400 7.400H4.400" fill="none" stroke="#dcdcdc" stroke-width=".8"/><path d="M.500 .600V8.400M0 1.400L.500 .500L1 1.400M0 7.600L.500 8.500L1 7.600" fill="none" stroke="#c8c8c8" stroke-width=".5"/></svg>
<div class="b" style="width:50px;height:72px;transform:translate(668.6px,183.4px) scale(.1);background:#3d3d3d;border-radius:10px;border:4px solid #505050;"></div><svg style="left:669.6px;top:184.39px;" width="3" height="1.9" viewBox="0 0 3 1.9"><path d="M0 1.9H3L1.5 0Z" fill="#ececec"/></svg><svg style="left:669.6px;top:187.71px;" width="3" height="1.9" viewBox="0 0 3 1.9"><path d="M0 0H3L1.5 1.9Z" fill="#ececec"/></svg>
<div class="b" style="width:218px;height:75px;transform:translate(675px,183px) scale(.1);background:#a4a4a4;border:4px solid #3a3a3a;"></div>
<span class="t" id="t27" style="left:676.8px;top:185px;font-size:47px;color:#1e1e1e;transform:scale(.1089,.1);-webkit-text-stroke:1.3px currentColor;">(96 pt)</span>
<div class="b" style="width:50px;height:70px;transform:translate(698.4px,183.3px) scale(.1);background:#393939;border-radius:10px;border:5px solid #545454;"></div><svg style="left:699.2px;top:185.95px;" width="3.4" height="2.1" viewBox="0 0 3.4 2.1"><path d="M0 0H3.4L1.7 2.1Z" fill="#f0f0f0"/></svg>
<svg style="left:600.8px;top:195.6px;" width="8.6" height="6.8" viewBox="0 0 8.6 6.8"><path d="M.200 .600L2.400 5.600L4.400 .600M3.600 6.200L5.800 1.200L8.200 6.200M4.600 4.600H7.200" fill="none" stroke="#dcdcdc" stroke-width=".9"/><path d="M4.300 .300L2.300 6.600" stroke="#bdbdbd" stroke-width=".5"/></svg>
<div class="b" style="width:48px;height:72px;transform:translate(612.3px,195.3px) scale(.1);background:#3d3d3d;border-radius:10px;border:4px solid #505050;"></div><svg style="left:613.2px;top:196.29px;" width="3" height="1.9" viewBox="0 0 3 1.9"><path d="M0 1.9H3L1.5 0Z" fill="#ececec"/></svg><svg style="left:613.2px;top:199.61px;" width="3" height="1.9" viewBox="0 0 3 1.9"><path d="M0 0H3L1.5 1.9Z" fill="#ececec"/></svg>
<div class="b" style="width:213px;height:77px;transform:translate(618.9px,195px) scale(.1);background:#a4a4a4;border:4px solid #3a3a3a;"></div>
<span class="t" id="t28" style="left:621px;top:197px;font-size:47px;color:#1e1e1e;transform:scale(.0993,.1);-webkit-text-stroke:1.3px currentColor;">Auto</span>
<div class="b" style="width:52px;height:70px;transform:translate(642.2px,195.3px) scale(.1);background:#393939;border-radius:10px;border:5px solid #545454;"></div><svg style="left:643.1px;top:197.95px;" width="3.4" height="2.1" viewBox="0 0 3.4 2.1"><path d="M0 0H3.4L1.7 2.1Z" fill="#f0f0f0"/></svg>
<svg style="left:657.4px;top:195.3px;" width="8.4" height="7.2" viewBox="0 0 8.4 7.2"><rect x=".3" y=".3" width="7.8" height="4.800" fill="none" stroke="#c8c8c8" stroke-width=".6"/><path d="M1.200 1.100L2.600 4.300L4 1.100M4.400 4.300L5.800 1.100L7.200 4.300M5 3.300H6.600" fill="none" stroke="#e0e0e0" stroke-width=".7"/><path d="M.300 6.400H8.100M.300 5.800V7M8.100 5.800V7" stroke="#c8c8c8" stroke-width=".6"/></svg>
<div class="b" style="width:50px;height:72px;transform:translate(668.6px,195.3px) scale(.1);background:#3d3d3d;border-radius:10px;border:4px solid #505050;"></div><svg style="left:669.6px;top:196.29px;" width="3" height="1.9" viewBox="0 0 3 1.9"><path d="M0 1.9H3L1.5 0Z" fill="#ececec"/></svg><svg style="left:669.6px;top:199.61px;" width="3" height="1.9" viewBox="0 0 3 1.9"><path d="M0 0H3L1.5 1.9Z" fill="#ececec"/></svg>
<div class="b" style="width:218px;height:77px;transform:translate(675px,195px) scale(.1);background:#a4a4a4;border:4px solid #3a3a3a;"></div>
<span class="t" id="t29" style="left:677.5px;top:197px;font-size:47px;color:#1e1e1e;transform:scale(.0918,.1);-webkit-text-stroke:1.3px currentColor;">0</span>
<div class="b" style="width:50px;height:70px;transform:translate(698.4px,195.3px) scale(.1);background:#393939;border-radius:10px;border:5px solid #545454;"></div><svg style="left:699.2px;top:197.95px;" width="3.4" height="2.1" viewBox="0 0 3.4 2.1"><path d="M0 0H3.4L1.7 2.1Z" fill="#f0f0f0"/></svg>
<!-- right -->
<div class="b" style="width:91px;height:4338px;transform:translate(771.7px,40.4px) scale(.1);background:#292929;"></div>
<div class="b" style="width:67px;height:4338px;transform:translate(772.6px,40.4px) scale(.1);background:#343434;"></div>
<svg style="left:773.6px;top:43.8px;" width="4.2" height="3.2" viewBox="0 0 4.2 3.2"><path d="M0 3.2H4.2L2.1 0Z" fill="#f0f0f0"/></svg>
<svg style="left:773.6px;top:468.7px;" width="4.2" height="3.2" viewBox="0 0 4.2 3.2"><path d="M0 0H4.2L2.1 3.2Z" fill="#f0f0f0"/></svg>
<div class="b" style="width:71px;height:70px;transform:translate(772.2px,246.9px) scale(.1);background:#ababab;"></div>
<div class="b" style="width:1300px;height:60px;transform:translate(779.5px,30.8px) scale(.1);background:#2c2c2c;"></div>
<div class="b" style="width:193px;height:4460px;transform:translate(780.7px,36.6px) scale(.1);background:#454545;"></div>
<div class="b" style="width:176px;height:1434px;transform:translate(780.7px,36.6px) scale(.1);background:#4a4a4a;"></div>
<div class="b" style="width:176px;height:10px;transform:translate(780.7px,179.9px) scale(.1);background:#2e2e2e;"></div>
<div class="b" style="width:17px;height:4460px;transform:translate(798.3px,36.6px) scale(.1);background:#2c2c2c;"></div>
<svg style="left:793.2px;top:32.9px;" width="3.8" height="1.8" viewBox="0 0 3.8 1.8"><path d="M0 0V1.800L1.500 .900ZM2.100 0V1.800L3.600 .900Z" fill="#bdbdbd"/></svg>
<svg style="left:903px;top:32.9px;" width="3.8" height="1.8" viewBox="0 0 3.8 1.8"><path d="M1.500 0V1.800L0 .900ZM3.600 0V1.800L2.100 .900Z" fill="#bdbdbd"/></svg>
<div class="b" style="width:90px;height:11px;transform:translate(785px,39px) scale(.1);background:#2a2a2a;"></div>
<div class="b" style="width:90px;height:11px;transform:translate(785px,71.9px) scale(.1);background:#2a2a2a;"></div>
<div class="b" style="width:90px;height:11px;transform:translate(785px,117.3px) scale(.1);background:#2a2a2a;"></div>
<div class="b" style="width:90px;height:11px;transform:translate(785px,163px) scale(.1);background:#2a2a2a;"></div>
<div class="b" style="width:176px;height:8px;transform:translate(780.7px,68.8px) scale(.1);background:#333;"></div>
<div class="b" style="width:176px;height:8px;transform:translate(780.7px,114.5px) scale(.1);background:#333;"></div>
<div class="b" style="width:176px;height:8px;transform:translate(780.7px,160.2px) scale(.1);background:#333;"></div>
<svg style="left:784.8px;top:44.8px;" width="10" height="7.2" viewBox="0 0 10 7.2"><ellipse cx="5" cy="3.600" rx="4.600" ry="3.200" fill="#6a6a6a" stroke="#dcdcdc" stroke-width=".9"/><circle cx="3.200" cy="3" r="1" fill="#e6e6e6"/><circle cx="5.600" cy="2.200" r="1" fill="#e6e6e6"/><circle cx="7" cy="4.200" r="1" fill="#e6e6e6"/><path d="M3 5.200C4 4.600 5 4.800 5.600 5.600" stroke="#e0e0e0" stroke-width=".7" fill="none"/></svg>
<svg style="left:785.2px;top:57px;" width="9.4" height="8.8" viewBox="0 0 9.4 8.8"><path d="M.400 8.400V.400C5 .600 8.600 3.800 9 8.400Z" fill="#8c8c8c" stroke="#dadada" stroke-width=".8"/><path d="M.400 8.400C1 5 2.800 3 5.800 2" fill="none" stroke="#e4e4e4" stroke-width=".6"/></svg>
<svg style="left:785.2px;top:77.8px;" width="9.2" height="5.6" viewBox="0 0 9.2 5.6"><rect x=".3" y=".3" width="8.600" height="5" fill="#777" stroke="#d6d6d6" stroke-width=".6"/><rect x="1.200" y="1.200" width="1.800" height="1.400" fill="#eee"/><rect x="3.700" y="1.200" width="1.800" height="1.400" fill="#eee"/><rect x="6.200" y="1.200" width="1.800" height="1.400" fill="#ddd"/><rect x="1.200" y="3.300" width="1.800" height="1.400" fill="#ccc"/><rect x="3.700" y="3.300" width="1.800" height="1.400" fill="#999"/></svg>
<svg style="left:786.4px;top:89.6px;" width="6.8" height="8.8" viewBox="0 0 6.8 8.8"><rect x="1.600" y="5" width="3.600" height="3.600" fill="#bdbdbd" stroke="#e4e4e4" stroke-width=".5"/><path d="M3.400 5V2.400M1.200 1L2.400 3.200M5.600 1L4.400 3.200M3.400 .200V1.600" stroke="#dedede" stroke-width=".9"/></svg>
<svg style="left:785.8px;top:103.5px;" width="8" height="7.4" viewBox="0 0 8 7.4"><circle cx="4" cy="2" r="1.900" fill="#dedede"/><circle cx="2" cy="4.400" r="1.900" fill="#dedede"/><circle cx="6" cy="4.400" r="1.900" fill="#dedede"/><path d="M4 3.500L5.200 7.400H2.800Z" fill="#dedede"/></svg>
<svg style="left:785.6px;top:123.1px;" width="8.4" height="6.4" viewBox="0 0 8.4 6.4"><path d="M0 .600H8.400" stroke="#d6d6d6" stroke-width="1.400"/><path d="M0 3.200H8.400" stroke="#d6d6d6" stroke-width="1"/><path d="M0 5.700H8.400" stroke="#d6d6d6" stroke-width=".7"/></svg>
<svg style="left:785.6px;top:136.2px;" width="8.4" height="6" viewBox="0 0 8.4 6"><defs><linearGradient id="g2"><stop offset="0" stop-color="#f4f4f4"/><stop offset="1" stop-color="#444"/></linearGradient></defs><rect x=".3" y=".3" width="7.800" height="5.400" fill="url(#g2)" stroke="#d2d2d2" stroke-width=".6"/></svg>
<svg style="left:785.4px;top:148.9px;" width="8.8" height="8.2" viewBox="0 0 8.8 8.2"><circle cx="3.400" cy="3.400" r="3" fill="#dadada"/><circle cx="5.400" cy="4.800" r="3" fill="#8c8c8c" stroke="#e2e2e2" stroke-width=".7"/></svg>
<svg style="left:785.6px;top:168.5px;" width="8.4" height="8.2" viewBox="0 0 8.4 8.2"><rect x="2.400" y=".400" width="5.600" height="5.600" rx=".800" fill="none" stroke="#d8d8d8" stroke-width=".8"/><circle cx="2.800" cy="5.600" r="2.300" fill="#9a9a9a" stroke="#e2e2e2" stroke-width=".7"/></svg>
<div class="b" style="width:1090px;height:4458px;transform:translate(800px,36.6px) scale(.1);background:#444;"></div>
<div class="b" style="width:12px;height:4454px;transform:translate(907.8px,36.6px) scale(.1);background:#383838;"></div>
<div class="b" style="width:1090px;height:80px;transform:translate(800px,37px) scale(.1);background:#2e2e2e;"></div><div class="b" style="width:230px;height:85px;transform:translate(800px,37px) scale(.1);background:#464646;border-radius:10px 10px 0 0;"></div><span class="t" id="t30" style="left:803.4px;top:39px;font-size:49px;color:#f2f2f2;font-weight:bold;transform:scale(.0913,.1);">Actions</span><svg style="left:900.4px;top:39.1px;" width="6.4" height="3.8" viewBox="0 0 6.4 3.8"><path d="M0 1H1.8L.9 2.100Z" fill="#cfcfcf"/><path d="M2.6 .3H6.400M2.600 1.400H6.400M2.600 2.500H6.400M2.600 3.600H6.400" stroke="#b4b4b4" stroke-width=".6"/></svg>
<div class="b" style="width:980px;height:1240px;transform:translate(802.6px,47.7px) scale(.1);background:#3a3a3a;"></div>
<div class="b" style="width:68px;height:1240px;transform:translate(900.6px,47.7px) scale(.1);background:#2b2b2b;"></div>
<svg style="left:902.4px;top:50.9px;" width="3.2" height="2.2" viewBox="0 0 3.2 2.2"><path d="M0 2.2H3.2L1.6 0Z" fill="#f0f0f0"/></svg>
<svg style="left:902.4px;top:166.9px;" width="3.2" height="2.2" viewBox="0 0 3.2 2.2"><path d="M0 0H3.2L1.6 2.2Z" fill="#f0f0f0"/></svg>
<div class="b" style="width:48px;height:656px;transform:translate(901.5px,57px) scale(.1);background:#8c8c8c;border-radius:5px;"></div>
<div class="b" style="width:88px;height:82px;transform:translate(803.2px,48.1px) scale(.1);background:#505050;"></div>
<div class="b" style="width:88px;height:82px;transform:translate(812.7px,48.1px) scale(.1);background:#505050;"></div>
<div class="b" style="width:782px;height:82px;transform:translate(822.2px,48.1px) scale(.1);background:#505050;"></div>
<svg style="left:804.8px;top:49.8px;" width="5.6" height="4.8" viewBox="0 0 5.6 4.8"><path d="M.400 2.600L2 4.400L5.200 .400" fill="none" stroke="#f2f2f2" stroke-width="1"/></svg>
<svg style="left:814.1px;top:49.4px;" width="6" height="5.6" viewBox="0 0 6 5.6"><rect x=".3" y=".3" width="5.400" height="5" fill="#8a8a8a" stroke="#c6c6c6" stroke-width=".6"/><path d="M.300 1.700H5.700" stroke="#d6d6d6" stroke-width=".8"/></svg>
<svg style="left:824.5px;top:51px;" width="3.8" height="2.6" viewBox="0 0 3.8 2.6"><path d="M0 0H3.8L1.9 2.6Z" fill="#f0f0f0"/></svg>
<svg style="left:832.3px;top:49.2px;" width="7" height="5.8" viewBox="0 0 7 5.8"><path d="M0 .800C0 .300 .300 0 .800 0H2.600L3.400 .900H6.200C6.700 .900 7 1.200 7 1.700V5.800H0Z" fill="#c9c9c9"/><path d="M0 2H7" stroke="#8a8a8a" stroke-width=".5"/></svg>
<span class="t" id="t31" style="left:841.2px;top:50px;font-size:50px;color:#e2e2e2;transform:scale(.0924,.1);">Default Actions</span>
<div class="b" style="width:88px;height:82px;transform:translate(803.2px,57.1px) scale(.1);background:#505050;"></div>
<div class="b" style="width:88px;height:82px;transform:translate(812.7px,57.1px) scale(.1);background:#505050;"></div>
<div class="b" style="width:782px;height:82px;transform:translate(822.2px,57.1px) scale(.1);background:#505050;"></div>
<svg style="left:804.8px;top:58.8px;" width="5.6" height="4.8" viewBox="0 0 5.6 4.8"><path d="M.400 2.600L2 4.400L5.200 .400" fill="none" stroke="#f2f2f2" stroke-width="1"/></svg>
<svg style="left:834.05px;top:59.3px;" width="2.9" height="3.8" viewBox="0 0 2.9 3.8"><path d="M0 0V3.8L2.9 1.9Z" fill="#f2f2f2"/></svg>
<span class="t" id="t32" style="left:841.2px;top:59px;font-size:50px;color:#e2e2e2;transform:scale(.0935,.1);">Opacity 60 (selection)</span>
<div class="b" style="width:88px;height:82px;transform:translate(803.2px,66.1px) scale(.1);background:#505050;"></div>
<div class="b" style="width:88px;height:82px;transform:translate(812.7px,66.1px) scale(.1);background:#505050;"></div>
<div class="b" style="width:782px;height:82px;transform:translate(822.2px,66.1px) scale(.1);background:#505050;"></div>
<svg style="left:804.8px;top:67.8px;" width="5.6" height="4.8" viewBox="0 0 5.6 4.8"><path d="M.400 2.600L2 4.400L5.200 .400" fill="none" stroke="#f2f2f2" stroke-width="1"/></svg>
<svg style="left:834.05px;top:68.3px;" width="2.9" height="3.8" viewBox="0 0 2.9 3.8"><path d="M0 0V3.8L2.9 1.9Z" fill="#f2f2f2"/></svg>
<span class="t" id="t33" style="left:841.2px;top:68px;font-size:50px;color:#e2e2e2;transform:scale(.0948,.1);">Opacity 40 Screen (select...</span>
<div class="b" style="width:88px;height:82px;transform:translate(803.2px,75.1px) scale(.1);background:#505050;"></div>
<div class="b" style="width:88px;height:82px;transform:translate(812.7px,75.1px) scale(.1);background:#505050;"></div>
<div class="b" style="width:782px;height:82px;transform:translate(822.2px,75.1px) scale(.1);background:#505050;"></div>
<svg style="left:804.8px;top:76.8px;" width="5.6" height="4.8" viewBox="0 0 5.6 4.8"><path d="M.400 2.600L2 4.400L5.200 .400" fill="none" stroke="#f2f2f2" stroke-width="1"/></svg>
<svg style="left:834.05px;top:77.3px;" width="2.9" height="3.8" viewBox="0 0 2.9 3.8"><path d="M0 0V3.8L2.9 1.9Z" fill="#f2f2f2"/></svg>
<span class="t" id="t34" style="left:841.2px;top:77px;font-size:50px;color:#e2e2e2;transform:scale(.0931,.1);">Apply Default Style (select...</span>
<div class="b" style="width:88px;height:82px;transform:translate(803.2px,84.1px) scale(.1);background:#505050;"></div>
<div class="b" style="width:88px;height:82px;transform:translate(812.7px,84.1px) scale(.1);background:#505050;"></div>
<div class="b" style="width:782px;height:82px;transform:translate(822.2px,84.1px) scale(.1);background:#505050;"></div>
<svg style="left:804.8px;top:85.8px;" width="5.6" height="4.8" viewBox="0 0 5.6 4.8"><path d="M.400 2.600L2 4.400L5.200 .400" fill="none" stroke="#f2f2f2" stroke-width="1"/></svg>
<svg style="left:814.1px;top:85.4px;" width="6" height="5.6" viewBox="0 0 6 5.6"><rect x=".3" y=".3" width="5.400" height="5" fill="#8a8a8a" stroke="#c6c6c6" stroke-width=".6"/><path d="M.300 1.700H5.700" stroke="#d6d6d6" stroke-width=".8"/></svg>
<svg style="left:834.05px;top:86.3px;" width="2.9" height="3.8" viewBox="0 0 2.9 3.8"><path d="M0 0V3.8L2.9 1.9Z" fill="#f2f2f2"/></svg>
<span class="t" id="t35" style="left:841.2px;top:86px;font-size:50px;color:#e2e2e2;transform:scale(.0924,.1);">Save For Web GIF 64 Dith...</span>
<div class="b" style="width:88px;height:82px;transform:translate(803.2px,93.1px) scale(.1);background:#505050;"></div>
<div class="b" style="width:88px;height:82px;transform:translate(812.7px,93.1px) scale(.1);background:#505050;"></div>
<div class="b" style="width:782px;height:82px;transform:translate(822.2px,93.1px) scale(.1);background:#505050;"></div>
<svg style="left:804.8px;top:94.8px;" width="5.6" height="4.8" viewBox="0 0 5.6 4.8"><path d="M.400 2.600L2 4.400L5.200 .400" fill="none" stroke="#f2f2f2" stroke-width="1"/></svg>
<svg style="left:814.1px;top:94.4px;" width="6" height="5.6" viewBox="0 0 6 5.6"><rect x=".3" y=".3" width="5.400" height="5" fill="#8a8a8a" stroke="#c6c6c6" stroke-width=".6"/><path d="M.300 1.700H5.700" stroke="#d6d6d6" stroke-width=".8"/></svg>
<svg style="left:834.05px;top:95.3px;" width="2.9" height="3.8" viewBox="0 0 2.9 3.8"><path d="M0 0V3.8L2.9 1.9Z" fill="#f2f2f2"/></svg>
<span class="t" id="t36" style="left:841.2px;top:95px;font-size:50px;color:#e2e2e2;transform:scale(.0904,.1);">Save For Web JPG Medium</span>
<div class="b" style="width:88px;height:82px;transform:translate(803.2px,102.1px) scale(.1);background:#505050;"></div>
<div class="b" style="width:88px;height:82px;transform:translate(812.7px,102.1px) scale(.1);background:#505050;"></div>
<div class="b" style="width:782px;height:82px;transform:translate(822.2px,102.1px) scale(.1);background:#505050;"></div>
<svg style="left:804.8px;top:103.8px;" width="5.6" height="4.8" viewBox="0 0 5.6 4.8"><path d="M.400 2.600L2 4.400L5.200 .400" fill="none" stroke="#f2f2f2" stroke-width="1"/></svg>
<svg style="left:814.1px;top:103.4px;" width="6" height="5.6" viewBox="0 0 6 5.6"><rect x=".3" y=".3" width="5.400" height="5" fill="#8a8a8a" stroke="#c6c6c6" stroke-width=".6"/><path d="M.300 1.700H5.700" stroke="#d6d6d6" stroke-width=".8"/></svg>
<svg style="left:834.05px;top:104.3px;" width="2.9" height="3.8" viewBox="0 0 2.9 3.8"><path d="M0 0V3.8L2.9 1.9Z" fill="#f2f2f2"/></svg>
<span class="t" id="t37" style="left:841.2px;top:104px;font-size:50px;color:#e2e2e2;transform:scale(.0905,.1);">Save For Web PNG 24</span>
<div class="b" style="width:88px;height:82px;transform:translate(803.2px,111.1px) scale(.1);background:#505050;"></div>
<div class="b" style="width:88px;height:82px;transform:translate(812.7px,111.1px) scale(.1);background:#505050;"></div>
<div class="b" style="width:782px;height:82px;transform:translate(822.2px,111.1px) scale(.1);background:#505050;"></div>
<svg style="left:804.8px;top:112.8px;" width="5.6" height="4.8" viewBox="0 0 5.6 4.8"><path d="M.400 2.600L2 4.400L5.200 .400" fill="none" stroke="#f2f2f2" stroke-width="1"/></svg>
<svg style="left:834.05px;top:113.3px;" width="2.9" height="3.8" viewBox="0 0 2.9 3.8"><path d="M0 0V3.8L2.9 1.9Z" fill="#f2f2f2"/></svg>
<span class="t" id="t38" style="left:841.2px;top:113px;font-size:50px;color:#e2e2e2;transform:scale(.0942,.1);">Simplify (selection)</span>
<div class="b" style="width:88px;height:82px;transform:translate(803.2px,120.1px) scale(.1);background:#505050;"></div>
<div class="b" style="width:88px;height:82px;transform:translate(812.7px,120.1px) scale(.1);background:#505050;"></div>
<div class="b" style="width:782px;height:82px;transform:translate(822.2px,120.1px) scale(.1);background:#505050;"></div>
<svg style="left:804.8px;top:121.8px;" width="5.6" height="4.8" viewBox="0 0 5.6 4.8"><path d="M.400 2.600L2 4.400L5.200 .400" fill="none" stroke="#f2f2f2" stroke-width="1"/></svg>
<svg style="left:834.05px;top:122.3px;" width="2.9" height="3.8" viewBox="0 0 2.9 3.8"><path d="M0 0V3.8L2.9 1.9Z" fill="#f2f2f2"/></svg>
<span class="t" id="t39" style="left:841.2px;top:122px;font-size:50px;color:#e2e2e2;transform:scale(.0948,.1);">Simplify Straight (selection)</span>
<div class="b" style="width:88px;height:82px;transform:translate(803.2px,129.1px) scale(.1);background:#505050;"></div>
<div class="b" style="width:88px;height:82px;transform:translate(812.7px,129.1px) scale(.1);background:#505050;"></div>
<div class="b" style="width:782px;height:82px;transform:translate(822.2px,129.1px) scale(.1);background:#505050;"></div>
<svg style="left:804.8px;top:130.8px;" width="5.6" height="4.8" viewBox="0 0 5.6 4.8"><path d="M.400 2.600L2 4.400L5.200 .400" fill="none" stroke="#f2f2f2" stroke-width="1"/></svg>
<svg style="left:834.05px;top:131.3px;" width="2.9" height="3.8" viewBox="0 0 2.9 3.8"><path d="M0 0V3.8L2.9 1.9Z" fill="#f2f2f2"/></svg>
<span class="t" id="t40" style="left:841.2px;top:131px;font-size:50px;color:#e2e2e2;transform:scale(.0917,.1);">Revert</span>
<div class="b" style="width:88px;height:82px;transform:translate(803.2px,138.1px) scale(.1);background:#505050;"></div>
<div class="b" style="width:88px;height:82px;transform:translate(812.7px,138.1px) scale(.1);background:#505050;"></div>
<div class="b" style="width:782px;height:82px;transform:translate(822.2px,138.1px) scale(.1);background:#505050;"></div>
<svg style="left:804.8px;top:139.8px;" width="5.6" height="4.8" viewBox="0 0 5.6 4.8"><path d="M.400 2.600L2 4.400L5.200 .400" fill="none" stroke="#f2f2f2" stroke-width="1"/></svg>
<svg style="left:814.1px;top:139.4px;" width="6" height="5.6" viewBox="0 0 6 5.6"><rect x=".3" y=".3" width="5.400" height="5" fill="#8a8a8a" stroke="#c6c6c6" stroke-width=".6"/><path d="M.300 1.700H5.700" stroke="#d6d6d6" stroke-width=".8"/></svg>
<svg style="left:834.05px;top:140.3px;" width="2.9" height="3.8" viewBox="0 0 2.9 3.8"><path d="M0 0V3.8L2.9 1.9Z" fill="#f2f2f2"/></svg>
<span class="t" id="t41" style="left:841.2px;top:140px;font-size:50px;color:#e2e2e2;transform:scale(.0927,.1);">Delete Unused Panel Items</span>
<div class="b" style="width:88px;height:82px;transform:translate(803.2px,147.1px) scale(.1);background:#505050;"></div>
<div class="b" style="width:88px;height:82px;transform:translate(812.7px,147.1px) scale(.1);background:#505050;"></div>
<div class="b" style="width:782px;height:82px;transform:translate(822.2px,147.1px) scale(.1);background:#505050;"></div>
<svg style="left:804.8px;top:148.8px;" width="5.6" height="4.8" viewBox="0 0 5.6 4.8"><path d="M.400 2.600L2 4.400L5.200 .400" fill="none" stroke="#f2f2f2" stroke-width="1"/></svg>
<svg style="left:814.1px;top:148.4px;" width="6" height="5.6" viewBox="0 0 6 5.6"><rect x=".3" y=".3" width="5.400" height="5" fill="#8a8a8a" stroke="#c6c6c6" stroke-width=".6"/><path d="M.300 1.700H5.700" stroke="#d6d6d6" stroke-width=".8"/></svg>
<svg style="left:834.05px;top:149.3px;" width="2.9" height="3.8" viewBox="0 0 2.9 3.8"><path d="M0 0V3.8L2.9 1.9Z" fill="#f2f2f2"/></svg>
<span class="t" id="t42" style="left:841.2px;top:149px;font-size:50px;color:#e2e2e2;transform:scale(.0915,.1);">Move Dialog (selection)</span>
<div class="b" style="width:88px;height:82px;transform:translate(803.2px,156.1px) scale(.1);background:#505050;"></div>
<div class="b" style="width:88px;height:82px;transform:translate(812.7px,156.1px) scale(.1);background:#505050;"></div>
<div class="b" style="width:782px;height:82px;transform:translate(822.2px,156.1px) scale(.1);background:#505050;"></div>
<svg style="left:804.8px;top:157.8px;" width="5.6" height="4.8" viewBox="0 0 5.6 4.8"><path d="M.400 2.600L2 4.400L5.200 .400" fill="none" stroke="#f2f2f2" stroke-width="1"/></svg>
<svg style="left:814.1px;top:157.4px;" width="6" height="5.6" viewBox="0 0 6 5.6"><rect x=".3" y=".3" width="5.400" height="5" fill="#8a8a8a" stroke="#c6c6c6" stroke-width=".6"/><path d="M.300 1.700H5.700" stroke="#d6d6d6" stroke-width=".8"/></svg>
<svg style="left:834.05px;top:158.3px;" width="2.9" height="3.8" viewBox="0 0 2.9 3.8"><path d="M0 0V3.8L2.9 1.9Z" fill="#f2f2f2"/></svg>
<span class="t" id="t43" style="left:841.2px;top:158px;font-size:50px;color:#e2e2e2;transform:scale(.091,.1);">Scale Dialog (selection)</span>
<div class="b" style="width:88px;height:82px;transform:translate(803.2px,165.1px) scale(.1);background:#505050;"></div>
<div class="b" style="width:88px;height:82px;transform:translate(812.7px,165.1px) scale(.1);background:#505050;"></div>
<div class="b" style="width:782px;height:82px;transform:translate(822.2px,165.1px) scale(.1);background:#505050;"></div>
<svg style="left:804.8px;top:166.8px;" width="5.6" height="4.8" viewBox="0 0 5.6 4.8"><path d="M.400 2.600L2 4.400L5.200 .400" fill="none" stroke="#f2f2f2" stroke-width="1"/></svg>
<svg style="left:814.1px;top:166.4px;" width="6" height="5.6" viewBox="0 0 6 5.6"><rect x=".3" y=".3" width="5.400" height="5" fill="#8a8a8a" stroke="#c6c6c6" stroke-width=".6"/><path d="M.300 1.700H5.700" stroke="#d6d6d6" stroke-width=".8"/></svg>
<svg style="left:834.05px;top:167.3px;" width="2.9" height="3.8" viewBox="0 0 2.9 3.8"><path d="M0 0V3.8L2.9 1.9Z" fill="#f2f2f2"/></svg>
<span class="t" id="t44" style="left:841.2px;top:167px;font-size:50px;color:#e2e2e2;transform:scale(.0921,.1);">Rotate Dialog (selection)</span>
<div class="b" style="width:1090px;height:25px;transform:translate(800px,171.7px) scale(.1);background:#444;"></div>
<div class="b" style="width:44px;height:44px;transform:translate(828.8px,174.2px) scale(.1);background:#686868;"></div>
<div class="b" style="width:46px;height:46px;transform:translate(841.2px,174.1px) scale(.1);background:#686868;border-radius:50%;"></div>
<svg style="left:853.8px;top:173.9px;" width="4.4" height="5" viewBox="0 0 4.4 5"><path d="M0 0V5L4.4 2.5Z" fill="#6c6c6c"/></svg>
<svg style="left:865.2px;top:173.6px;" width="6.2" height="5.4" viewBox="0 0 6.2 5.4"><path d="M0 .800C0 .300 .300 0 .800 0H2.400L3.100 .800H5.500C6 .800 6.200 1.100 6.200 1.600V5.400H0Z" fill="#e0e0e0"/></svg>
<svg style="left:878.2px;top:173.6px;" width="5.2" height="5.6" viewBox="0 0 5.2 5.6"><path d="M.400 .400H3.400L4.800 1.800V5.200H.400Z" fill="#e4e4e4"/><path d="M0 2.800H2.600V5.600H0Z" fill="#444" stroke="#e4e4e4" stroke-width=".6"/></svg>
<svg style="left:890.5px;top:173.6px;" width="4.8" height="5.6" viewBox="0 0 4.8 5.6"><path d="M.400 1.600H4.400L4 5.400H.800Z" fill="#6a6a6a"/><path d="M0 1H4.800M1.600 .300H3.200" stroke="#6a6a6a" stroke-width=".7"/></svg>
<div class="b" style="width:1090px;height:17px;transform:translate(800px,180.6px) scale(.1);background:#2a2a2a;"></div>
<div class="b" style="width:1090px;height:74px;transform:translate(800px,182.3px) scale(.1);background:#2e2e2e;"></div><div class="b" style="width:190px;height:79px;transform:translate(800px,182.3px) scale(.1);background:#464646;border-radius:10px 10px 0 0;"></div><span class="t" id="t45" style="left:803.2px;top:184px;font-size:49px;color:#f2f2f2;font-weight:bold;transform:scale(.0898,.1);">Links</span><span class="t" id="t46" style="left:821.6px;top:184px;font-size:49px;color:#a6a6a6;transform:scale(.1032,.1);">Document Info</span><svg style="left:900.4px;top:184.1px;" width="6.4" height="3.8" viewBox="0 0 6.4 3.8"><path d="M0 1H1.8L.9 2.100Z" fill="#cfcfcf"/><path d="M2.6 .3H6.400M2.600 1.400H6.400M2.600 2.500H6.400M2.600 3.600H6.400" stroke="#b4b4b4" stroke-width=".6"/></svg>
<div class="b" style="width:1032px;height:1226px;transform:translate(802.6px,192.8px) scale(.1);background:#474747;border:7px solid #393939;"></div>
<svg style="left:852.6px;top:319.7px;" width="6.4" height="3.2" viewBox="0 0 6.4 3.2"><rect x=".3" y=".3" width="3" height="2.600" rx="1.300" fill="none" stroke="#6c6c6c" stroke-width=".7"/><rect x="3.100" y=".3" width="3" height="2.600" rx="1.300" fill="none" stroke="#6c6c6c" stroke-width=".7"/></svg>
<svg style="left:865px;top:318.9px;" width="6.4" height="4.8" viewBox="0 0 6.4 4.8"><path d="M0 2.400H4M2.600 .800L4.400 2.400L2.600 4" fill="none" stroke="#707070" stroke-width=".8"/><rect x="3.600" y=".300" width="2.500" height="4.200" fill="none" stroke="#707070" stroke-width=".6"/></svg>
<svg style="left:877.6px;top:318.7px;" width="5.6" height="5.2" viewBox="0 0 5.6 5.2"><path d="M4.800 1.800A2.300 2.300 0 1 0 5 3.400" fill="none" stroke="#707070" stroke-width=".8"/><path d="M5.600 .400V2.400H3.600Z" fill="#707070"/></svg>
<svg style="left:887.8px;top:318.5px;" width="7.4" height="5.8" viewBox="0 0 7.4 5.8"><path d="M.300 5.500L1.200 3.800L6 .300L7.100 1.500L2.400 5Z" fill="#6c6c6c"/></svg>
<div class="b" style="width:1090px;height:17px;transform:translate(800px,325.3px) scale(.1);background:#2a2a2a;"></div>
<div class="b" style="width:1090px;height:82px;transform:translate(800px,327.2px) scale(.1);background:#2e2e2e;"></div><div class="b" style="width:260px;height:87px;transform:translate(800px,327.2px) scale(.1);background:#464646;border-radius:10px 10px 0 0;"></div><span class="t" id="t47" style="left:802.6px;top:329px;font-size:49px;color:#f2f2f2;font-weight:bold;transform:scale(.0957,.1);">Variables</span><span class="t" id="t48" style="left:829.9px;top:329px;font-size:49px;color:#a6a6a6;transform:scale(.098,.1);">Appearance</span><svg style="left:900.4px;top:329.4px;" width="6.4" height="3.8" viewBox="0 0 6.4 3.8"><path d="M0 1H1.8L.9 2.100Z" fill="#cfcfcf"/><path d="M2.6 .3H6.400M2.600 1.400H6.400M2.600 2.500H6.400M2.600 3.600H6.400" stroke="#b4b4b4" stroke-width=".6"/></svg>
<div class="b" style="width:1090px;height:20px;transform:translate(800px,335.4px) scale(.1);background:#2a2a2a;"></div>
<div class="b" style="width:1090px;height:86px;transform:translate(800px,337.4px) scale(.1);background:#2e2e2e;"></div><div class="b" style="width:200px;height:91px;transform:translate(800px,337.4px) scale(.1);background:#464646;border-radius:10px 10px 0 0;"></div><span class="t" id="t49" style="left:802.6px;top:339px;font-size:49px;color:#f2f2f2;font-weight:bold;transform:scale(.0842,.1);">Layers</span><span class="t" id="t50" style="left:823.2px;top:339px;font-size:49px;color:#a6a6a6;transform:scale(.1017,.1);">Artboards</span><svg style="left:900.4px;top:339.8px;" width="6.4" height="3.8" viewBox="0 0 6.4 3.8"><path d="M0 1H1.8L.9 2.100Z" fill="#cfcfcf"/><path d="M2.6 .3H6.400M2.600 1.400H6.400M2.600 2.500H6.400M2.600 3.600H6.400" stroke="#b4b4b4" stroke-width=".6"/></svg>
<div class="b" style="width:1046px;height:1235px;transform:translate(802.6px,348.4px) scale(.1);background:#474747;border:7px solid #393939;"></div>
<div class="b" style="width:1036px;height:92px;transform:translate(803.2px,348.8px) scale(.1);background:#5b657a;"></div>
<div class="b" style="width:6px;height:92px;transform:translate(888.8px,348.8px) scale(.1);background:#454c5c;"></div>
<div class="b" style="width:6px;height:92px;transform:translate(812.4px,348.8px) scale(.1);background:#454c5c;"></div>
<div class="b" style="width:6px;height:92px;transform:translate(821px,348.8px) scale(.1);background:#454c5c;"></div>
<svg style="left:804.4px;top:351.3px;" width="6.4" height="4.2" viewBox="0 0 6.4 4.2"><path d="M.200 2.100C1.400 .300 5 .300 6.200 2.100C5 3.900 1.400 3.900 .200 2.100Z" fill="none" stroke="#e6e6e6" stroke-width=".7"/><circle cx="3.200" cy="2.100" r="1.100" fill="#e6e6e6"/></svg>
<div class="b" style="width:12px;height:92px;transform:translate(822.8px,348.8px) scale(.1);background:#4c7df0;"></div>
<svg style="left:827.5px;top:351.5px;" width="2.8" height="3.8" viewBox="0 0 2.8 3.8"><path d="M0 0V3.8L2.8 1.9Z" fill="#f2f2f2"/></svg>
<svg style="left:835.5px;top:349.4px;" width="7.8" height="7.8" viewBox="0 0 7.8 7.8"><rect width="7.800" height="7.800" fill="#fff"/><path d="M1.400 1.400H2.600L3 2.600L3.400 1.400H4.400V3.600H1.400ZM1.400 4.200H3V5.600H1.400Z" fill="#222"/></svg>
<span class="t" id="t51" style="left:845.8px;top:351px;font-size:50px;color:#f0f0f0;transform:scale(.0941,.1);">Layer 1</span>
<svg style="left:891.6px;top:351.2px;" width="4.4" height="4.4" viewBox="0 0 4.4 4.4"><circle cx="2.200" cy="2.200" r="1.800" fill="none" stroke="#e0e0e0" stroke-width=".7"/></svg>
<svg style="left:903.6px;top:349.4px;" width="2.4" height="2.4" viewBox="0 0 2.4 2.4"><path d="M0 0H2.400V2.400Z" fill="#f4f4f4"/></svg>
<span class="t" id="t52" style="left:802.6px;top:476px;font-size:49px;color:#dcdcdc;transform:scale(.0857,.1);">1 Layer</span>
<svg style="left:840.6px;top:475.4px;" width="5.2" height="5.2" viewBox="0 0 5.2 5.2"><circle cx="3.200" cy="2" r="1.700" fill="none" stroke="#6c6c6c" stroke-width=".8"/><path d="M2 3.200L.300 4.900" stroke="#6c6c6c" stroke-width=".9"/></svg>
<svg style="left:853px;top:475.2px;" width="5.6" height="5.6" viewBox="0 0 5.6 5.6"><rect x=".3" y=".3" width="5" height="5" rx=".600" fill="#6e6e6e" stroke="#e0e0e0" stroke-width=".6"/><circle cx="2.800" cy="2.800" r="1.400" fill="#e8e8e8"/></svg>
<svg style="left:864.8px;top:475.4px;" width="6.6" height="5.2" viewBox="0 0 6.6 5.2"><path d="M0 .400H6.600V2.200H4.600V4.800H3V2.200H0Z" fill="#e0e0e0"/><rect x="4" y="2.800" width="2.600" height="2.400" fill="#e0e0e0"/></svg>
<svg style="left:877.8px;top:475.2px;" width="5.2" height="5.6" viewBox="0 0 5.2 5.6"><path d="M.400 .400H3.400L4.800 1.800V5.200H.400Z" fill="#e4e4e4"/><path d="M0 2.800H2.600V5.600H0Z" fill="#444" stroke="#e4e4e4" stroke-width=".6"/></svg>
<svg style="left:890px;top:475.2px;" width="4.8" height="5.6" viewBox="0 0 4.8 5.6"><path d="M.400 1.600H4.400L4 5.400H.800Z" fill="#6a6a6a"/><path d="M0 1H4.800M1.600 .300H3.200" stroke="#6a6a6a" stroke-width=".7"/></svg>
<!-- status -->
<div class="b" style="width:7458px;height:80px;transform:translate(35px,474.2px) scale(.1);background:#383838;"></div>
<div class="b" style="width:5370px;height:10px;transform:translate(235px,474.2px) scale(.1);background:#2a2a2a;"></div>
<div class="b" style="width:70px;height:70px;transform:translate(772.4px,475px) scale(.1);background:#4a4a4a;"></div>
<div class="b" style="width:2000px;height:80px;transform:translate(35px,474.2px) scale(.1);background:#4b4b4b;"></div>
<div class="b" style="width:200px;height:64px;transform:translate(37.3px,475.8px) scale(.1);background:#a8a8a8;border:4px solid #555;"></div>
<span class="t" id="t53" style="left:38.5px;top:477px;font-size:48px;color:#101010;transform:scale(.0921,.1);-webkit-text-stroke:1.2px currentColor;">100%</span>
<div class="b" style="width:60px;height:62px;transform:translate(58px,475.8px) scale(.1);background:#3a3a3a;border-radius:10px;"></div>
<svg style="left:59.6px;top:478.25px;" width="2.8" height="1.7" viewBox="0 0 2.8 1.7"><path d="M0 0H2.8L1.4 1.7Z" fill="#e6e6e6"/></svg>
<svg style="left:67.6px;top:477.4px;" width="3.6" height="3.2" viewBox="0 0 3.6 3.2"><path d="M0 0V3.200" stroke="#6a6a6a" stroke-width=".8"/><path d="M3.400 0V3.200L1 1.600Z" fill="#6a6a6a"/></svg>
<svg style="left:76.9px;top:477.4px;" width="2.2" height="3.2" viewBox="0 0 2.2 3.2"><path d="M2.2 0V3.2L0 1.6Z" fill="#6a6a6a"/></svg>
<div class="b" style="width:195px;height:64px;transform:translate(85.2px,475.8px) scale(.1);background:#a8a8a8;border:4px solid #555;"></div>
<span class="t" id="t54" style="left:86.3px;top:477px;font-size:48px;color:#101010;transform:scale(.0749,.1);-webkit-text-stroke:1.2px currentColor;">1</span>
<div class="b" style="width:60px;height:62px;transform:translate(105.2px,475.8px) scale(.1);background:#3a3a3a;border-radius:10px;"></div>
<svg style="left:106.8px;top:478.25px;" width="2.8" height="1.7" viewBox="0 0 2.8 1.7"><path d="M0 0H2.8L1.4 1.7Z" fill="#e6e6e6"/></svg>
<svg style="left:115.7px;top:477.4px;" width="2.2" height="3.2" viewBox="0 0 2.2 3.2"><path d="M0 0V3.2L2.2 1.6Z" fill="#6a6a6a"/></svg>
<svg style="left:123.6px;top:477.4px;" width="3.6" height="3.2" viewBox="0 0 3.6 3.2"><path d="M3.400 0V3.200" stroke="#6a6a6a" stroke-width=".8"/><path d="M0 0V3.200L2.400 1.600Z" fill="#6a6a6a"/></svg>
<div class="b" style="width:6px;height:64px;transform:translate(131.5px,475.6px) scale(.1);background:#3a3a3a;"></div>
<span class="t" id="t55" style="left:169.2px;top:477px;font-size:49px;color:#dcdcdc;transform:scale(.0923,.1);">Selection</span>
<svg style="left:229.3px;top:477.2px;" width="2.4" height="3.6" viewBox="0 0 2.4 3.6"><path d="M0 0V3.6L2.4 1.8Z" fill="#f0f0f0"/></svg>
<svg style="left:237.9px;top:477.1px;" width="2.6" height="3.8" viewBox="0 0 2.6 3.8"><path d="M2.6 0V3.8L0 1.9Z" fill="#f0f0f0"/></svg>
<svg style="left:765.5px;top:477.3px;" width="2.6" height="3.8" viewBox="0 0 2.6 3.8"><path d="M0 0V3.8L2.6 1.9Z" fill="#f0f0f0"/></svg>
<div class="b" style="width:72px;height:71px;transform:translate(497.1px,474.7px) scale(.1);background:#ababab;"></div>
<!-- taskbar -->
<div class="b" style="width:9090px;height:290px;transform:translate(0px,482px) scale(.1);background:#101010;"></div>
<div class="b" style="width:836px;height:290px;transform:translate(637.6px,482px) scale(.1);background:#343434;"></div>
<div class="b" style="width:773px;height:14px;transform:translate(138.6px,509.6px) scale(.1);background:#a9def0;"></div>
<div class="b" style="width:772px;height:14px;transform:translate(223px,509.6px) scale(.1);background:#a9def0;"></div>
<div class="b" style="width:772px;height:14px;transform:translate(306.9px,509.6px) scale(.1);background:#a9def0;"></div>
<div class="b" style="width:771px;height:14px;transform:translate(391.3px,509.6px) scale(.1);background:#a9def0;"></div>
<div class="b" style="width:780px;height:14px;transform:translate(473.5px,509.6px) scale(.1);background:#a9def0;"></div>
<div class="b" style="width:782px;height:14px;transform:translate(557.1px,509.6px) scale(.1);background:#a9def0;"></div>
<div class="b" style="width:836px;height:14px;transform:translate(637.6px,509.6px) scale(.1);background:#a9def0;"></div>
<svg style="left:11.1px;top:490.6px;" width="12" height="12.4" viewBox="0 0 12 12.4"><path d="M0 1.700L5 1V5.900H0ZM5.800 .900L12 0V5.900H5.800ZM0 6.600H5V11.500L0 10.800ZM5.800 6.600H12V12.400L5.800 11.600Z" fill="#fff"/></svg>
<svg style="left:43.6px;top:491.4px;" width="15.8" height="10.6" viewBox="0 0 15.8 10.6"><rect x="3.200" y=".500" width="9.400" height="9.600" rx=".800" fill="none" stroke="#c4c4c4" stroke-width="1"/><path d="M1.600 2.200C.800 2.200 .500 2.600 .500 3.200V7.400C.500 8 .800 8.400 1.600 8.400M14.200 2.200C15 2.200 15.300 2.600 15.300 3.200V7.400C15.300 8 15 8.400 14.200 8.400" fill="none" stroke="#c4c4c4" stroke-width="1"/></svg>
<svg style="left:78.2px;top:488.4px;" width="16" height="16" viewBox="0 0 16 16"><circle cx="8" cy="8" r="7.300" fill="#16171c" stroke="#b9b9b9" stroke-width="1.100"/></svg>
<span class="t" id="t56" style="left:83.2px;top:492px;font-size:98px;color:#fff;font-weight:bold;transform:scale(.0697,.1);font-family:'Liberation Serif',serif;">p</span>
<span class="t" id="t57" style="left:86.8px;top:491px;font-size:86px;color:#fff;font-weight:bold;transform:scale(.0814,.1);font-family:'Liberation Serif',serif;">3</span>
<svg style="left:111.8px;top:489.2px;" width="15.2" height="15.2" viewBox="0 0 15.2 15.2"><circle cx="7.600" cy="7.600" r="7.600" fill="#17999f"/><path d="M7.600 7.600C6.600 5.800 5.600 5.200 4.600 5.200A2.400 2.400 0 1 0 4.600 10C5.600 10 6.600 9.400 7.600 7.600C8.600 5.800 9.600 5.200 10.600 5.200A2.400 2.400 0 1 1 10.600 10C9.600 10 8.600 9.400 7.600 7.600Z" fill="none" stroke="#fff" stroke-width="1.300"/><path d="M3.800 7.600H5.400M9.800 7.600H11.400M10.600 6.800V8.400" stroke="#fff" stroke-width=".7"/></svg>
<svg style="left:142px;top:488px;" width="18" height="18.4" viewBox="0 0 18 18.4"><circle cx="7.900" cy="7.900" r="7.900" fill="#dd4b3e"/><path d="M7.900 7.900L1.060 3.950A7.900 7.900 0 0 0 7.900 15.800Z" fill="#1ea362"/><path d="M7.900 7.900V15.800A7.900 7.900 0 0 0 14.740 3.950Z" fill="#fcc934"/><path d="M7.900 7.900L1.060 3.950A7.900 7.900 0 0 1 14.740 3.950Z" fill="#dd4b3e"/><circle cx="7.900" cy="7.900" r="3.700" fill="#fff"/><circle cx="7.900" cy="7.900" r="2.900" fill="#4a8af4"/><circle cx="12" cy="13.400" r="4.600" fill="#f4f4f4" stroke="#222" stroke-width=".6"/><path d="M12 11.400L13.800 12.700L13.100 14.800H10.900L10.200 12.700Z" fill="#1c1c1c"/><path d="M12 9L12 11.400M16 12.200L13.800 12.700M14.600 17L13.100 14.800M9.400 17L10.900 14.800M8 12.200L10.200 12.700" stroke="#1c1c1c" stroke-width=".6"/></svg>
<span class="t" id="t58" style="left:161px;top:493px;font-size:88px;color:#f4f4f4;transform:scale(.0975,.1);">About Me - ...</span>
<div class="b" style="width:162px;height:155px;transform:translate(226.1px,488.2px) scale(.1);background:#14170a;border:18px solid #c2d000;"></div>
<span class="t" id="t59" style="left:228.9px;top:490px;font-size:106px;color:#d2e212;transform:scale(.0801,.1);-webkit-text-stroke:1px currentColor;">Mu</span>
<span class="t" id="t60" style="left:245.1px;top:493px;font-size:88px;color:#f4f4f4;transform:scale(.0911,.1);">Week2</span>
<svg style="left:309.9px;top:488.3px;" width="17.4" height="17.4" viewBox="0 0 17.4 17.4"><g transform="translate(8.700 8.700) rotate(45)"><rect x="-5.800" y="-5.800" width="5.400" height="5.400" rx=".800" fill="#e65a5a"/><rect x=".400" y="-5.800" width="5.400" height="5.400" rx=".800" fill="#7fcf4a"/><rect x="-5.800" y=".400" width="5.400" height="5.400" rx=".800" fill="#5a9ee6"/><rect x=".400" y=".400" width="5.400" height="5.400" rx=".800" fill="#e6d94a"/></g><path d="M8.700 5V12.600M8.700 9L12 8" stroke="#111" stroke-width="1.200"/><circle cx="8.700" cy="5" r="1.300" fill="#111"/><circle cx="8.700" cy="12.600" r="1.300" fill="#111"/><circle cx="12.200" cy="8" r="1.300" fill="#111"/></svg>
<span class="t" id="t61" style="left:329.3px;top:493px;font-size:88px;color:#f4f4f4;transform:scale(.0936,.1);">MINGW64:/...</span>
<svg style="left:396.6px;top:489.9px;" width="9.4" height="14.2" viewBox="0 0 9.4 14.2"><path d="M0 .800C0 .300 .300 0 .800 0H3.200L4.200 1.200H8.600C9.100 1.200 9.400 1.500 9.400 2V12.800H1.400L0 14.200Z" fill="#f3d472"/><path d="M0 2.200H2.400V13H0Z" fill="#e2b94e"/></svg>
<span class="t" id="t62" style="left:413.2px;top:493px;font-size:88px;color:#f4f4f4;transform:scale(.0944,.1);">depth1</span>
<svg style="left:478.9px;top:489.9px;" width="12.4" height="14" viewBox="0 0 12.4 14"><path d="M0 .800C0 .300 .300 0 .800 0H3.200L4.200 1.200H8.600C9.100 1.200 9.400 1.500 9.400 2V12.600H1.400L0 14Z" fill="#f3d472"/><path d="M0 2.200H2V13H0Z" fill="#e2b94e"/><path d="M7.200 6.400L9.400 6.400L12.400 11.400L11.300 13.400Z" fill="#f6c338"/><path d="M7.200 6.400L8.300 8.400L5.400 13.400L4.200 11.400Z" fill="#2da562"/><path d="M5.400 13.400L6.600 11.400H12.400L11.300 13.400Z" fill="#3b7de0"/></svg>
<span class="t" id="t63" style="left:495.7px;top:493px;font-size:88px;color:#f4f4f4;transform:scale(.0956,.1);">Google Drive</span>
<svg style="left:562.6px;top:489.9px;" width="12.4" height="14" viewBox="0 0 12.4 14"><path d="M0 .800C0 .300 .300 0 .800 0H3.200L4.200 1.200H8.600C9.100 1.200 9.400 1.500 9.400 2V12.600H1.400L0 14Z" fill="#f3d472"/><path d="M0 2.200H2V13H0Z" fill="#e2b94e"/><path d="M7.200 6.400L9.400 6.400L12.400 11.400L11.300 13.400Z" fill="#f6c338"/><path d="M7.200 6.400L8.300 8.400L5.400 13.400L4.200 11.400Z" fill="#2da562"/><path d="M5.400 13.400L6.600 11.400H12.400L11.300 13.400Z" fill="#3b7de0"/></svg>
<span class="t" id="t64" style="left:578.9px;top:493px;font-size:88px;color:#f4f4f4;transform:scale(.0956,.1);">Google Drive</span>
<div class="b" style="width:162px;height:155px;transform:translate(644.1px,488.2px) scale(.1);background:#1f1100;border:18px solid #eda01f;"></div>
<span class="t" id="t65" style="left:648.1px;top:491px;font-size:99px;color:#f7ae2c;font-weight:bold;transform:scale(.0818,.1);">Ai</span>
<span class="t" id="t66" style="left:663.3px;top:493px;font-size:88px;color:#f4f4f4;transform:scale(.095,.1);">Untitled-1* ...</span>
<svg style="left:728px;top:494.3px;" width="8.6" height="5.2" viewBox="0 0 8.6 5.2"><path d="M.400 4.800L4.300 .700L8.200 4.800" fill="none" stroke="#f0f0f0" stroke-width="1"/></svg>
<svg style="left:745.2px;top:492.3px;" width="9.4" height="9.6" viewBox="0 0 9.4 9.6"><g fill="none" stroke-linecap="butt"><path d="M.500 9.100A8.600 8.600 0 0 1 9 .500" stroke="#b8b8b8" stroke-width=".9"/><path d="M2.900 9.100A6.200 6.200 0 0 1 9 2.900" stroke="#cfcfcf" stroke-width=".9"/><path d="M5.300 9.100A3.800 3.800 0 0 1 9 5.300" stroke="#e6e6e6" stroke-width=".9"/></g><circle cx="8.200" cy="8.300" r="1.100" fill="#f4f4f4"/></svg>
<svg style="left:759.7px;top:492.9px;" width="12.6" height="8" viewBox="0 0 12.6 8"><rect x="2" y="1.400" width="10" height="6" fill="#f2f2f2"/><rect x=".400" y="3.200" width="1.600" height="2.400" fill="#f2f2f2"/><path d="M1.800 .300H5.400V2.600H3.600V1.600H1.800Z" fill="#f2f2f2"/></svg>
<svg style="left:777.5px;top:492.9px;" width="11" height="8.6" viewBox="0 0 11 8.6"><path d="M0 2.900H2L4.600 .500V8.100L2 5.700H0Z" fill="none" stroke="#f0f0f0" stroke-width=".9"/><path d="M6 2.800C6.800 3.700 6.800 4.900 6 5.800M7.600 1.600C9 3.100 9 5.500 7.600 7M9.200 .500C11.200 2.600 11.200 6 9.200 8.100" fill="none" stroke="#dadada" stroke-width=".8"/></svg>
<span class="t" id="t67" style="left:796.5px;top:493px;font-size:86px;color:#f4f4f4;transform:scale(.0832,.1);">ENG</span>
<span class="t" id="t68" style="left:826.9px;top:487px;font-size:84px;color:#f4f4f4;transform:scale(.0985,.1);">11:54 PM</span>
<span class="t" id="t69" style="left:822.1px;top:499px;font-size:84px;color:#f4f4f4;transform:scale(.1034,.1);">08-11-2017</span>
<svg style="left:879.7px;top:491.1px;" width="11.8" height="11.4" viewBox="0 0 11.8 11.4"><path d="M.500 .500H11.300V8.400H7.600L5.900 10.600L4.200 8.400H.500Z" fill="none" stroke="#f0f0f0" stroke-width="1"/></svg>
<div class="b" style="width:7px;height:290px;transform:translate(905.8px,482px) scale(.1);background:#5a5a5a;"></div>
</div>
</body>
</html>
